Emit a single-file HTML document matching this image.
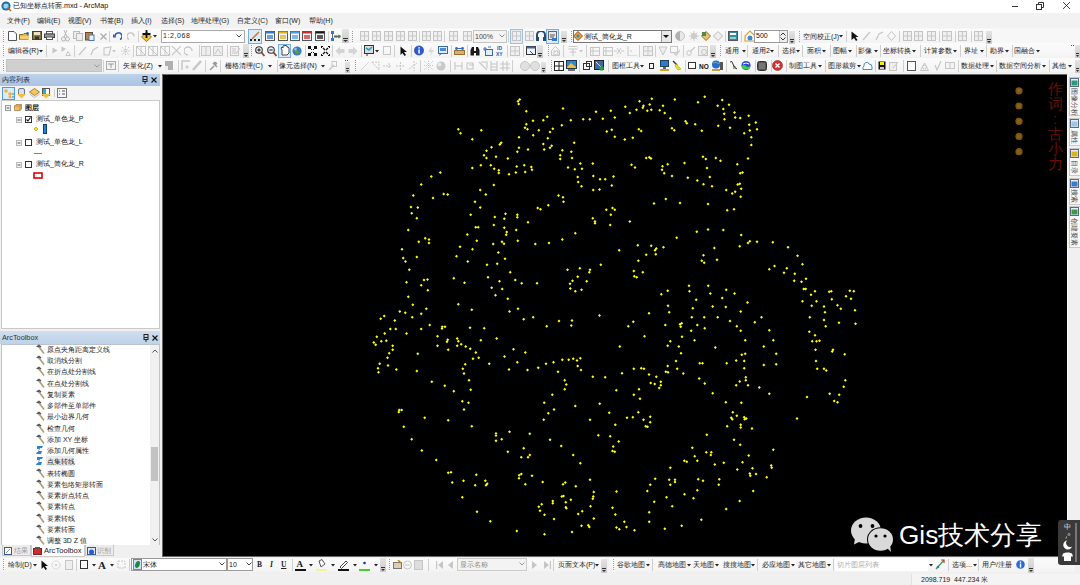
<!DOCTYPE html>
<html><head><meta charset="utf-8">
<style>
*{margin:0;padding:0;box-sizing:border-box}
html,body{width:1080px;height:585px;overflow:hidden;background:#f0f0f0;font-family:"Liberation Sans",sans-serif;color:#000;position:relative}
.a{position:absolute}
.t{position:absolute;white-space:nowrap}
</style></head><body>
<div class="a" style="left:0px;top:0px;width:1080px;height:13px;background:#fff"></div>
<svg class="a" style="left:1px;top:1px" width="11" height="11" viewBox="0 0 11 11"><circle cx="5" cy="5" r="4.6" fill="#1d6fa5"/><circle cx="5" cy="5" r="2.6" fill="#9fd3ea"/><path d="M6.5 6.5L10 10" stroke="#c0601a" stroke-width="1.6"/></svg>
<div class="t" style="left:13px;top:2px;font-size:7.2px;line-height:8.2px;color:#111;">已知坐标点转面.mxd - ArcMap</div>
<div class="a" style="left:1012px;top:6px;width:6px;height:1px;background:#333"></div>
<svg class="a" style="left:1036px;top:2px" width="8" height="8" viewBox="0 0 8 8"><rect x="0.5" y="2.5" width="5" height="5" fill="none" stroke="#333"/><path d="M2.5 2.5V0.5H7.5V5.5H5.5" fill="none" stroke="#333"/></svg>
<svg class="a" style="left:1063px;top:2px" width="7" height="7" viewBox="0 0 7 7"><path d="M0 0L7 7M7 0L0 7" stroke="#333" stroke-width="0.9"/></svg>
<div class="a" style="left:0px;top:13px;width:1080px;height:15px;background:#f2f2f2"></div>
<div class="t" style="left:7px;top:16.5px;font-size:7px;line-height:8px;color:#222;">文件(F)</div>
<div class="t" style="left:37px;top:16.5px;font-size:7px;line-height:8px;color:#222;">编辑(E)</div>
<div class="t" style="left:68px;top:16.5px;font-size:7px;line-height:8px;color:#222;">视图(V)</div>
<div class="t" style="left:100px;top:16.5px;font-size:7px;line-height:8px;color:#222;">书签(B)</div>
<div class="t" style="left:131px;top:16.5px;font-size:7px;line-height:8px;color:#222;">插入(I)</div>
<div class="t" style="left:161px;top:16.5px;font-size:7px;line-height:8px;color:#222;">选择(S)</div>
<div class="t" style="left:191px;top:16.5px;font-size:7px;line-height:8px;color:#222;">地理处理(G)</div>
<div class="t" style="left:237px;top:16.5px;font-size:7px;line-height:8px;color:#222;">自定义(C)</div>
<div class="t" style="left:275px;top:16.5px;font-size:7px;line-height:8px;color:#222;">窗口(W)</div>
<div class="t" style="left:309px;top:16.5px;font-size:7px;line-height:8px;color:#222;">帮助(H)</div>
<div class="a" style="left:0px;top:28px;width:1080px;height:45px;background:#f7f7f7"></div>
<div class="a" style="left:0px;top:29px;width:993px;height:14px;background:linear-gradient(#fbfbfb,#f3f3f3)"></div>
<div class="a" style="left:0px;top:43px;width:1080px;height:15px;background:linear-gradient(#fbfbfb,#f3f3f3)"></div>
<div class="a" style="left:0px;top:58px;width:1080px;height:15px;background:linear-gradient(#fbfbfb,#f3f3f3)"></div>
<div class="a" style="left:0px;top:72px;width:1080px;height:2px;background:#f0f0f0"></div>
<svg class="a" style="left:3px;top:31px" width="1" height="11" viewBox="0 0 1 11"><rect x="0" y="0" width="1" height="1" fill="#9a9a9a"/><rect x="0" y="2" width="1" height="1" fill="#9a9a9a"/><rect x="0" y="4" width="1" height="1" fill="#9a9a9a"/><rect x="0" y="6" width="1" height="1" fill="#9a9a9a"/><rect x="0" y="8" width="1" height="1" fill="#9a9a9a"/><rect x="0" y="10" width="1" height="1" fill="#9a9a9a"/></svg>
<svg class="a" style="left:8px;top:31px" width="9" height="10" viewBox="0 0 9 10"><path d="M0.5 0.5H6L8.5 3V9.5H0.5Z" fill="#f8fbff" stroke="#555"/></svg>
<svg class="a" style="left:19px;top:32px" width="11" height="8" viewBox="0 0 11 8"><path d="M0.5 2.5H4L5 1.5H9V7.5H0.5Z" fill="#e8b84a" stroke="#8a6a1a"/><rect x="1" y="4" width="9" height="3.5" fill="#f2cf6b"/><circle cx="8.5" cy="1.5" r="1.4" fill="#2a6fc9"/></svg>
<svg class="a" style="left:32px;top:31px" width="10" height="9" viewBox="0 0 10 9"><rect x="0.5" y="0.5" width="9" height="8" fill="#8a7840" stroke="#4a4020"/><rect x="2" y="1" width="6" height="3" fill="#e9e4c8"/><rect x="3" y="5.5" width="4" height="3" fill="#333"/></svg>
<svg class="a" style="left:44px;top:31px" width="11" height="9" viewBox="0 0 11 9"><rect x="2.5" y="0.5" width="6" height="2.5" fill="#fff" stroke="#555"/><rect x="0.5" y="3" width="10" height="3.5" fill="#9a9a9a" stroke="#444"/><rect x="2.5" y="6" width="6" height="2.5" fill="#fff" stroke="#555"/></svg>
<div class="a" style="left:57px;top:31px;width:1px;height:11px;background:#cfcfcf"></div>
<svg class="a" style="left:61px;top:30px" width="9" height="12" viewBox="0 0 9 12"><circle cx="2.5" cy="9" r="2" fill="none" stroke="#b5b5b5"/><circle cx="6.5" cy="9" r="2" fill="none" stroke="#b5b5b5"/><path d="M3 7L6 0M6 7L3 0" stroke="#b5b5b5"/></svg>
<svg class="a" style="left:73px;top:31px" width="10" height="10" viewBox="0 0 10 10"><rect x="0.5" y="0.5" width="6" height="7" fill="#eee" stroke="#bbb"/><rect x="3.5" y="2.5" width="6" height="7" fill="#eee" stroke="#bbb"/></svg>
<svg class="a" style="left:85px;top:31px" width="10" height="10" viewBox="0 0 10 10"><rect x="0.5" y="1.5" width="7" height="7.5" fill="#b9834a" stroke="#6a4a2a"/><rect x="4" y="4" width="5" height="5.5" fill="#eaf2fb" stroke="#4a7ab0"/></svg>
<svg class="a" style="left:100px;top:33px" width="7" height="7" viewBox="0 0 7 7"><path d="M0.5 0.5L6.5 6.5M6.5 0.5L0.5 6.5" stroke="#a8a8a8" stroke-width="1.1"/></svg>
<div class="a" style="left:109px;top:31px;width:1px;height:11px;background:#cfcfcf"></div>
<svg class="a" style="left:113px;top:32px" width="9" height="8" viewBox="0 0 9 8"><path d="M2 4.5 A3.5 3.5 0 1 1 7 7.5" fill="none" stroke="#2a5db0" stroke-width="1.5"/><path d="M0 2L3.5 5.5H0Z" fill="#2a5db0"/></svg>
<svg class="a" style="left:127px;top:32px" width="9" height="8" viewBox="0 0 9 8"><path d="M7 4.5 A3.5 3.5 0 1 0 2 7.5" fill="none" stroke="#c4c4c4" stroke-width="1.3"/></svg>
<div class="a" style="left:138px;top:31px;width:1px;height:11px;background:#cfcfcf"></div>
<svg class="a" style="left:141px;top:30px" width="11" height="12" viewBox="0 0 11 12"><path d="M5.5 2L10.5 7L5.5 11.5L0.5 7Z" fill="#f0c040" stroke="#9a7a20"/><path d="M5.5 0V8M1.5 4H9.5" stroke="#111" stroke-width="1.8"/></svg>
<svg class="a" style="left:153px;top:35px" width="4" height="3" viewBox="0 0 4 3"><path d="M0 0 L4 0 L2 2.5Z" fill="#222"/></svg>
<div class="a" style="left:161px;top:30px;width:84px;height:13px;background:#fff;border:1px solid #a9a9a9"></div>
<div class="t" style="left:163px;top:32px;font-size:7px;line-height:8px;color:#222;letter-spacing:0.6px">1:2,068</div>
<svg class="a" style="left:236px;top:34px" width="6" height="4" viewBox="0 0 6 4"><path d="M0.5 0.5L3 3L5.5 0.5" fill="none" stroke="#444"/></svg>
<div class="a" style="left:248px;top:29px;width:14px;height:15px;background:#dcebfa;border:1px solid #74aee8"></div>
<svg class="a" style="left:250px;top:31px" width="10" height="10" viewBox="0 0 10 10"><path d="M2 8L9 1" stroke="#d08030" stroke-width="1.6"/><rect x="0" y="8" width="2" height="2" fill="#222"/><rect x="4" y="8" width="2" height="2" fill="#222"/><rect x="8" y="8" width="2" height="2" fill="#222"/></svg>
<svg class="a" style="left:265px;top:31px" width="10" height="10" viewBox="0 0 10 10"><rect x="0.5" y="0.5" width="9" height="9" fill="#f2f5fa" stroke="#555"/><rect x="0.5" y="0.5" width="9" height="2" fill="#3a78c8"/><rect x="2" y="4" width="6" height="4" fill="#3a78c8" opacity="0.7"/></svg>
<svg class="a" style="left:278px;top:31px" width="10" height="10" viewBox="0 0 10 10"><rect x="0.5" y="0.5" width="9" height="9" fill="#f2f5fa" stroke="#555"/><rect x="0.5" y="0.5" width="9" height="2" fill="#e0b020"/><rect x="2" y="4" width="6" height="4" fill="#e0b020" opacity="0.7"/></svg>
<svg class="a" style="left:290px;top:31px" width="10" height="10" viewBox="0 0 10 10"><rect x="0.5" y="0.5" width="9" height="9" fill="#f2f5fa" stroke="#555"/><rect x="0.5" y="0.5" width="9" height="2" fill="#4aa0e0"/><rect x="2" y="4" width="6" height="4" fill="#4aa0e0" opacity="0.7"/></svg>
<svg class="a" style="left:302px;top:31px" width="10" height="10" viewBox="0 0 10 10"><rect x="0.5" y="0.5" width="9" height="9" fill="#f2f5fa" stroke="#555"/><rect x="0.5" y="0.5" width="9" height="2" fill="#c83030"/><rect x="2" y="4" width="6" height="4" fill="#c83030" opacity="0.7"/></svg>
<svg class="a" style="left:315px;top:31px" width="10" height="10" viewBox="0 0 10 10"><rect x="0.5" y="0.5" width="9" height="9" fill="#f2f5fa" stroke="#555"/><rect x="0.5" y="0.5" width="9" height="2" fill="#1a1a1a"/><rect x="2" y="4" width="6" height="4" fill="#1a1a1a" opacity="0.7"/></svg>
<div class="a" style="left:328px;top:31px;width:1px;height:11px;background:#cfcfcf"></div>
<svg class="a" style="left:331px;top:31px" width="10" height="11" viewBox="0 0 10 11"><rect x="0" y="0" width="3" height="3" fill="#2a78d0"/><rect x="0" y="7" width="3" height="3" fill="#2a78d0"/><rect x="3" y="4" width="3" height="3" fill="#c8a040"/><circle cx="8" cy="5.5" r="1.8" fill="#40a040"/><path d="M1.5 3V7M3 5.5H8" stroke="#666"/></svg>
<div class="a" style="left:342px;top:29px;width:7px;height:14px;background:linear-gradient(#e4e4e4,#c9c9c9)"></div>
<svg class="a" style="left:342px;top:38px" width="7" height="4" viewBox="0 0 7 4"><rect x="1" y="0" width="5" height="1" fill="#333"/><path d="M1 2 L6 2 L3.5 4Z" fill="#333"/></svg>
<svg class="a" style="left:352px;top:31px" width="1" height="11" viewBox="0 0 1 11"><rect x="0" y="0" width="1" height="1" fill="#9a9a9a"/><rect x="0" y="2" width="1" height="1" fill="#9a9a9a"/><rect x="0" y="4" width="1" height="1" fill="#9a9a9a"/><rect x="0" y="6" width="1" height="1" fill="#9a9a9a"/><rect x="0" y="8" width="1" height="1" fill="#9a9a9a"/><rect x="0" y="10" width="1" height="1" fill="#9a9a9a"/></svg>
<svg class="a" style="left:360px;top:31px" width="9" height="10" viewBox="0 0 9 10"><rect x="0.5" y="0.5" width="8" height="9" fill="#f0f0f0" stroke="#c4c4c4"/><path d="M0.5 5.0H8.5 M4.5 0.5V9.5" stroke="#c8c8c8"/></svg>
<svg class="a" style="left:372px;top:31px" width="9" height="10" viewBox="0 0 9 10"><rect x="0.5" y="0.5" width="8" height="9" fill="#f0f0f0" stroke="#c4c4c4"/><path d="M0.5 5.0H8.5 M4.5 0.5V9.5" stroke="#c8c8c8"/></svg>
<svg class="a" style="left:384px;top:31px" width="9" height="10" viewBox="0 0 9 10"><rect x="0.5" y="0.5" width="8" height="9" fill="#f0f0f0" stroke="#c4c4c4"/><path d="M0.5 5.0H8.5 M4.5 0.5V9.5" stroke="#c8c8c8"/></svg>
<svg class="a" style="left:396px;top:31px" width="9" height="10" viewBox="0 0 9 10"><rect x="0.5" y="0.5" width="8" height="9" fill="#f0f0f0" stroke="#c4c4c4"/><path d="M0.5 5.0H8.5 M4.5 0.5V9.5" stroke="#c8c8c8"/></svg>
<svg class="a" style="left:408px;top:31px" width="9" height="10" viewBox="0 0 9 10"><rect x="0.5" y="0.5" width="8" height="9" fill="#f0f0f0" stroke="#c4c4c4"/><path d="M0.5 5.0H8.5 M4.5 0.5V9.5" stroke="#c8c8c8"/></svg>
<div class="a" style="left:419px;top:31px;width:1px;height:11px;background:#cfcfcf"></div>
<svg class="a" style="left:422px;top:31px" width="9" height="10" viewBox="0 0 9 10"><rect x="0.5" y="0.5" width="8" height="9" fill="#f0f0f0" stroke="#c4c4c4"/><path d="M0.5 5.0H8.5 M4.5 0.5V9.5" stroke="#c8c8c8"/></svg>
<svg class="a" style="left:433px;top:31px" width="9" height="10" viewBox="0 0 9 10"><rect x="0.5" y="0.5" width="8" height="9" fill="#f0f0f0" stroke="#c4c4c4"/><path d="M0.5 5.0H8.5 M4.5 0.5V9.5" stroke="#c8c8c8"/></svg>
<div class="a" style="left:444px;top:31px;width:1px;height:11px;background:#cfcfcf"></div>
<svg class="a" style="left:449px;top:31px" width="9" height="10" viewBox="0 0 9 10"><rect x="0.5" y="0.5" width="8" height="9" fill="#f0f0f0" stroke="#c4c4c4"/><path d="M0.5 5.0H8.5 M4.5 0.5V9.5" stroke="#c8c8c8"/></svg>
<svg class="a" style="left:463px;top:31px" width="9" height="10" viewBox="0 0 9 10"><rect x="0.5" y="0.5" width="8" height="9" fill="#f0f0f0" stroke="#c4c4c4"/><path d="M0.5 5.0H8.5 M4.5 0.5V9.5" stroke="#c8c8c8"/></svg>
<div class="a" style="left:473px;top:30px;width:34px;height:13px;background:#f4f4f4;border:1px solid #c4c4c4"></div>
<div class="t" style="left:475px;top:32.5px;font-size:7px;line-height:8px;color:#444;">100%</div>
<svg class="a" style="left:499px;top:34px" width="6" height="4" viewBox="0 0 6 4"><path d="M0.5 0.5L3 3L5.5 0.5" fill="none" stroke="#888"/></svg>
<div class="a" style="left:508px;top:31px;width:1px;height:11px;background:#cfcfcf"></div>
<div class="a" style="left:510px;top:29px;width:13px;height:15px;background:#e4edf6;border:1px solid #9cc0e4"></div>
<svg class="a" style="left:512px;top:31px" width="9" height="10" viewBox="0 0 9 10"><rect x="0.5" y="0.5" width="8" height="9" fill="#f0f0f0" stroke="#c4c4c4"/><path d="M0.5 5.0H8.5 M4.5 0.5V9.5" stroke="#c8c8c8"/></svg>
<svg class="a" style="left:525px;top:31px" width="9" height="10" viewBox="0 0 9 10"><rect x="0.5" y="0.5" width="8" height="9" fill="#f0f0f0" stroke="#c4c4c4"/><path d="M0.5 5.0H8.5 M4.5 0.5V9.5" stroke="#c8c8c8"/></svg>
<svg class="a" style="left:536px;top:31px" width="10" height="10" viewBox="0 0 10 10"><path d="M1 9V4A4 4 0 0 1 9 4V9" fill="none" stroke="#2a4a6a" stroke-width="2"/><rect x="0" y="6" width="3" height="4" fill="#2a4a6a"/><rect x="7" y="6" width="3" height="4" fill="#2a4a6a"/></svg>
<div class="a" style="left:546px;top:29px;width:13px;height:15px;background:#dcebfa;border:1px solid #74aee8"></div>
<svg class="a" style="left:548px;top:31px" width="10" height="10" viewBox="0 0 10 10"><rect x="0.5" y="0.5" width="8" height="8" fill="#e8e8e8" stroke="#666"/><path d="M2 4H7M2 6H6" stroke="#555"/><rect x="4" y="7" width="5" height="3" fill="#3a78c8"/></svg>
<div class="a" style="left:561px;top:31px;width:6px;height:12px;background:linear-gradient(#e4e4e4,#c9c9c9)"></div>
<svg class="a" style="left:561px;top:38px" width="6" height="4" viewBox="0 0 6 4"><rect x="1" y="0" width="4" height="1" fill="#333"/><path d="M1 2 L5 2 L3.0 4Z" fill="#333"/></svg>
<svg class="a" style="left:571px;top:31px" width="1" height="11" viewBox="0 0 1 11"><rect x="0" y="0" width="1" height="1" fill="#9a9a9a"/><rect x="0" y="2" width="1" height="1" fill="#9a9a9a"/><rect x="0" y="4" width="1" height="1" fill="#9a9a9a"/><rect x="0" y="6" width="1" height="1" fill="#9a9a9a"/><rect x="0" y="8" width="1" height="1" fill="#9a9a9a"/><rect x="0" y="10" width="1" height="1" fill="#9a9a9a"/></svg>
<div class="a" style="left:573px;top:30px;width:99px;height:13px;background:#fff;border:1px solid #777"></div>
<svg class="a" style="left:573px;top:31px" width="10" height="10" viewBox="0 0 10 10"><path d="M5 0.5L9.5 5L5 9.5L0.5 5Z" fill="#f0a030" stroke="#a05010"/><path d="M5 3L7 5L5 7L3 5Z" fill="#3a8ad0"/></svg>
<div class="t" style="left:584px;top:32.5px;font-size:7px;line-height:8px;color:#111;">测试_简化龙_R</div>
<div class="a" style="left:661px;top:31px;width:10px;height:11px;background:#e8e8e8;border-left:1px solid #999"></div>
<svg class="a" style="left:663px;top:35px" width="6" height="4" viewBox="0 0 6 4"><path d="M0 0H6L3 3Z" fill="#111"/></svg>
<svg class="a" style="left:675px;top:31px" width="10" height="10" viewBox="0 0 10 10"><circle cx="5" cy="5" r="4.5" fill="#e8e8e8" stroke="#c4c4c4"/><path d="M5 0.5A4.5 4.5 0 0 0 5 9.5Z" fill="#b0b0b0"/></svg>
<svg class="a" style="left:689px;top:31px" width="10" height="10" viewBox="0 0 10 10"><circle cx="5" cy="5" r="3" fill="#ccc"/><path d="M5 0V10M0 5H10M1.5 1.5L8.5 8.5M8.5 1.5L1.5 8.5" stroke="#ccc"/></svg>
<svg class="a" style="left:701px;top:31px" width="10" height="10" viewBox="0 0 10 10"><path d="M5 0.5L9.5 5L5 9.5L0.5 5Z" fill="#e8c070" stroke="#9a7030"/><rect x="1" y="1" width="4" height="4" fill="#4a8a4a"/></svg>
<svg class="a" style="left:713px;top:31px" width="10" height="10" viewBox="0 0 10 10"><path d="M5 0.5L9.5 5L5 9.5L0.5 5Z" fill="#eee" stroke="#bbb"/></svg>
<div class="a" style="left:725px;top:31px;width:1px;height:11px;background:#cfcfcf"></div>
<svg class="a" style="left:728px;top:31px" width="10" height="10" viewBox="0 0 10 10"><rect x="0.5" y="0.5" width="9" height="9" fill="#3a8a9a" stroke="#555"/><rect x="2" y="2" width="6" height="2" fill="#fff"/><rect x="2" y="6" width="6" height="2" fill="#8ad0e0"/></svg>
<div class="a" style="left:741px;top:31px;width:1px;height:11px;background:#cfcfcf"></div>
<svg class="a" style="left:744px;top:30px" width="12" height="12" viewBox="0 0 12 12"><path d="M1 6L6 1L11 6V11H1Z" fill="#fff" stroke="#e0a030" stroke-width="1.2"/><circle cx="6" cy="8" r="2.5" fill="#3a8ad0"/></svg>
<div class="a" style="left:754px;top:30px;width:34px;height:13px;background:#fff;border:1px solid #999"></div>
<div class="t" style="left:756px;top:31.5px;font-size:7px;line-height:8px;color:#111;">500</div>
<div class="a" style="left:779px;top:31px;width:8px;height:11px;background:#eee;border-left:1px solid #bbb"></div>
<svg class="a" style="left:780px;top:32px" width="6" height="9" viewBox="0 0 6 9"><path d="M0.5 3.5L3 1L5.5 3.5M0.5 5.5L3 8L5.5 5.5" fill="none" stroke="#333"/></svg>
<div class="a" style="left:789px;top:31px;width:6px;height:13px;background:linear-gradient(#e4e4e4,#c9c9c9)"></div>
<svg class="a" style="left:789px;top:39px" width="6" height="4" viewBox="0 0 6 4"><rect x="1" y="0" width="4" height="1" fill="#333"/><path d="M1 2 L5 2 L3.0 4Z" fill="#333"/></svg>
<svg class="a" style="left:799px;top:31px" width="1" height="11" viewBox="0 0 1 11"><rect x="0" y="0" width="1" height="1" fill="#9a9a9a"/><rect x="0" y="2" width="1" height="1" fill="#9a9a9a"/><rect x="0" y="4" width="1" height="1" fill="#9a9a9a"/><rect x="0" y="6" width="1" height="1" fill="#9a9a9a"/><rect x="0" y="8" width="1" height="1" fill="#9a9a9a"/><rect x="0" y="10" width="1" height="1" fill="#9a9a9a"/></svg>
<div class="t" style="left:803px;top:32.5px;font-size:7px;line-height:8px;color:#222;">空间校正(J)</div>
<svg class="a" style="left:839px;top:35px" width="4" height="3" viewBox="0 0 4 3"><path d="M0 0 L4 0 L2 2.5Z" fill="#222"/></svg>
<div class="a" style="left:846px;top:31px;width:1px;height:11px;background:#cfcfcf"></div>
<svg class="a" style="left:851px;top:31px" width="8" height="10" viewBox="0 0 8 10"><path d="M0.5 0.5V9L3 7L5 10L6.5 9L4.5 6H7.5Z" fill="#111"/></svg>
<svg class="a" style="left:862px;top:31px" width="9" height="10" viewBox="0 0 9 10"><path d="M1 9L8 1" stroke="#c4c4c4" stroke-width="1.2"/></svg>
<svg class="a" style="left:875px;top:31px" width="9" height="10" viewBox="0 0 9 10"><path d="M1 9L4 3L8 1" fill="none" stroke="#c4c4c4" stroke-width="1.2"/></svg>
<svg class="a" style="left:887px;top:31px" width="9" height="10" viewBox="0 0 9 10"><path d="M4.5 0.5L8.5 5L4.5 9.5L0.5 5Z" fill="none" stroke="#c4c4c4"/></svg>
<div class="a" style="left:899px;top:31px;width:1px;height:11px;background:#cfcfcf"></div>
<svg class="a" style="left:903px;top:31px" width="9" height="10" viewBox="0 0 9 10"><rect x="0.5" y="0.5" width="8" height="9" fill="#f0f0f0" stroke="#c4c4c4"/><path d="M0.5 5.0H8.5 M4.5 0.5V9.5" stroke="#c8c8c8"/></svg>
<svg class="a" style="left:914px;top:31px" width="9" height="10" viewBox="0 0 9 10"><rect x="0.5" y="0.5" width="8" height="9" fill="#f0f0f0" stroke="#c4c4c4"/><path d="M0.5 5.0H8.5 M4.5 0.5V9.5" stroke="#c8c8c8"/></svg>
<svg class="a" style="left:927px;top:31px" width="9" height="10" viewBox="0 0 9 10"><rect x="0.5" y="0.5" width="8" height="9" fill="#f0f0f0" stroke="#c4c4c4"/><path d="M0.5 5.0H8.5 M4.5 0.5V9.5" stroke="#c8c8c8"/></svg>
<div class="a" style="left:939px;top:31px;width:1px;height:11px;background:#cfcfcf"></div>
<svg class="a" style="left:942px;top:31px" width="10" height="10" viewBox="0 0 10 10"><rect x="0.5" y="0.5" width="9" height="9" fill="#f0f0f0" stroke="#c4c4c4"/><path d="M0.5 5.0H9.5 M5.0 0.5V9.5" stroke="#c8c8c8"/></svg>
<div class="a" style="left:955px;top:31px;width:1px;height:11px;background:#cfcfcf"></div>
<svg class="a" style="left:958px;top:31px" width="9" height="10" viewBox="0 0 9 10"><rect x="0.5" y="0.5" width="8" height="9" fill="#f0f0f0" stroke="#c4c4c4"/><path d="M0.5 5.0H8.5 M4.5 0.5V9.5" stroke="#c8c8c8"/></svg>
<div class="a" style="left:971px;top:31px;width:1px;height:11px;background:#cfcfcf"></div>
<svg class="a" style="left:974px;top:31px" width="9" height="10" viewBox="0 0 9 10"><rect x="0.5" y="0.5" width="8" height="9" fill="#f0f0f0" stroke="#c4c4c4"/><path d="M0.5 5.0H8.5 M4.5 0.5V9.5" stroke="#c8c8c8"/></svg>
<div class="a" style="left:986px;top:31px;width:6px;height:13px;background:linear-gradient(#e4e4e4,#c9c9c9)"></div>
<svg class="a" style="left:986px;top:39px" width="6" height="4" viewBox="0 0 6 4"><rect x="1" y="0" width="4" height="1" fill="#333"/><path d="M1 2 L5 2 L3.0 4Z" fill="#333"/></svg>
<svg class="a" style="left:3px;top:45px" width="1" height="11" viewBox="0 0 1 11"><rect x="0" y="0" width="1" height="1" fill="#9a9a9a"/><rect x="0" y="2" width="1" height="1" fill="#9a9a9a"/><rect x="0" y="4" width="1" height="1" fill="#9a9a9a"/><rect x="0" y="6" width="1" height="1" fill="#9a9a9a"/><rect x="0" y="8" width="1" height="1" fill="#9a9a9a"/><rect x="0" y="10" width="1" height="1" fill="#9a9a9a"/></svg>
<div class="t" style="left:8px;top:47px;font-size:7px;line-height:8px;color:#222;">编辑器(R)</div>
<svg class="a" style="left:39px;top:50px" width="4" height="3" viewBox="0 0 4 3"><path d="M0 0 L4 0 L2 2.5Z" fill="#222"/></svg>
<div class="a" style="left:46px;top:45px;width:1px;height:12px;background:#cfcfcf"></div>
<svg class="a" style="left:52px;top:47px" width="6" height="7" viewBox="0 0 6 7"><path d="M0.5 0.5L5.5 3.5L0.5 6.5Z" fill="#c6c6c6"/></svg>
<svg class="a" style="left:61px;top:46px" width="10" height="10" viewBox="0 0 10 10"><path d="M0.5 0.5L5 3L0.5 6Z" fill="#c6c6c6"/><path d="M5 9.5L7 5.5L9.5 9.5Z" fill="none" stroke="#c6c6c6"/></svg>
<div class="a" style="left:74px;top:45px;width:1px;height:12px;background:#cfcfcf"></div>
<svg class="a" style="left:78px;top:46px" width="9" height="10" viewBox="0 0 9 10"><path d="M1 9L8 1" stroke="#c6c6c6" stroke-width="1.2"/></svg>
<svg class="a" style="left:90px;top:46px" width="9" height="10" viewBox="0 0 9 10"><path d="M1 9L3 4L8 1" fill="none" stroke="#c6c6c6" stroke-width="1.2"/></svg>
<svg class="a" style="left:103px;top:46px" width="9" height="10" viewBox="0 0 9 10"><path d="M1 9V2L8 1L6 9Z" fill="none" stroke="#c6c6c6" stroke-width="1.1"/></svg>
<svg class="a" style="left:112px;top:50px" width="4" height="3" viewBox="0 0 4 3"><path d="M0 0H4L2 2.5Z" fill="#c6c6c6"/></svg>
<svg class="a" style="left:121px;top:46px" width="9" height="10" viewBox="0 0 9 10"><path d="M4.5 0V10M0 5H9M1 1L8 9M8 1L1 9" stroke="#c6c6c6" stroke-dasharray="1.5 1"/></svg>
<div class="a" style="left:133px;top:45px;width:1px;height:12px;background:#cfcfcf"></div>
<svg class="a" style="left:136px;top:46px" width="10" height="10" viewBox="0 0 10 10"><rect x="0.5" y="0.5" width="9" height="9" fill="none" stroke="#c6c6c6"/><path d="M1 1L9 9M5 0V10" stroke="#c6c6c6"/></svg>
<svg class="a" style="left:148px;top:46px" width="10" height="10" viewBox="0 0 10 10"><rect x="0.5" y="0.5" width="9" height="9" fill="none" stroke="#c6c6c6"/><path d="M1 1L9 9M5 0V10" stroke="#c6c6c6"/></svg>
<svg class="a" style="left:160px;top:46px" width="10" height="10" viewBox="0 0 10 10"><rect x="0.5" y="0.5" width="9" height="9" fill="none" stroke="#c6c6c6"/><path d="M1 1L9 9M5 0V10" stroke="#c6c6c6"/></svg>
<svg class="a" style="left:172px;top:46px" width="9" height="10" viewBox="0 0 9 10"><path d="M0 0L9 9M9 0L0 9" stroke="#c6c6c6" stroke-width="1.1"/></svg>
<svg class="a" style="left:184px;top:46px" width="9" height="10" viewBox="0 0 9 10"><path d="M4 9A4 4 0 1 1 8 5" fill="none" stroke="#c6c6c6" stroke-width="1.4"/></svg>
<div class="a" style="left:199px;top:45px;width:1px;height:12px;background:#cfcfcf"></div>
<svg class="a" style="left:201px;top:46px" width="10" height="10" viewBox="0 0 10 10"><rect x="0.5" y="0.5" width="9" height="9" fill="#eee" stroke="#c6c6c6"/><path d="M5 0V10" stroke="#c6c6c6"/></svg>
<svg class="a" style="left:213px;top:46px" width="10" height="10" viewBox="0 0 10 10"><rect x="0.5" y="0.5" width="9" height="9" fill="#eee" stroke="#c6c6c6"/><path d="M2 8L5 3L8 8" fill="none" stroke="#c6c6c6"/></svg>
<div class="a" style="left:227px;top:45px;width:1px;height:12px;background:#cfcfcf"></div>
<svg class="a" style="left:230px;top:46px" width="10" height="10" viewBox="0 0 10 10"><rect x="0.5" y="0.5" width="8" height="9" fill="#f2f2f2" stroke="#c6c6c6"/><path d="M2 3H6M2 5H6M2 7H6M6 8L10 2" stroke="#c6c6c6"/></svg>
<div class="a" style="left:243px;top:44px;width:6px;height:14px;background:linear-gradient(#e4e4e4,#c9c9c9)"></div>
<svg class="a" style="left:243px;top:53px" width="6" height="4" viewBox="0 0 6 4"><rect x="1" y="0" width="4" height="1" fill="#333"/><path d="M1 2 L5 2 L3.0 4Z" fill="#333"/></svg>
<svg class="a" style="left:251px;top:45px" width="1" height="12" viewBox="0 0 1 12"><rect x="0" y="0" width="1" height="1" fill="#9a9a9a"/><rect x="0" y="2" width="1" height="1" fill="#9a9a9a"/><rect x="0" y="4" width="1" height="1" fill="#9a9a9a"/><rect x="0" y="6" width="1" height="1" fill="#9a9a9a"/><rect x="0" y="8" width="1" height="1" fill="#9a9a9a"/><rect x="0" y="10" width="1" height="1" fill="#9a9a9a"/></svg>
<svg class="a" style="left:255px;top:46px" width="10" height="11" viewBox="0 0 10 11"><circle cx="4" cy="4" r="3.3" fill="#eef4fb" stroke="#333" stroke-width="1.1"/><path d="M2.3 4H5.7M4 2.3V5.7" stroke="#111"/><path d="M6.5 6.5L9.5 10" stroke="#8a4a1a" stroke-width="1.8"/></svg>
<svg class="a" style="left:267px;top:46px" width="10" height="11" viewBox="0 0 10 11"><circle cx="4" cy="4" r="3.3" fill="#eef4fb" stroke="#333" stroke-width="1.1"/><path d="M2.3 4H5.7" stroke="#111"/><path d="M6.5 6.5L9.5 10" stroke="#8a4a1a" stroke-width="1.8"/></svg>
<div class="a" style="left:278px;top:44px;width:13px;height:14px;background:#dcebfa;border:1px solid #74aee8"></div>
<svg class="a" style="left:280px;top:45px" width="10" height="11" viewBox="0 0 10 11"><path d="M2 10V5L1 3L2 2L3 3V1L4 0.5L5 1V0.5L6 0.5L7 1V2L8 2L9 3V8L7 10Z" fill="#fff" stroke="#333" stroke-width="0.9"/></svg>
<svg class="a" style="left:292px;top:46px" width="10" height="10" viewBox="0 0 10 10"><circle cx="5" cy="5" r="4.6" fill="#3a7ac8"/><path d="M2 3Q4 2 5 4T8 6Q7 8 5 8Q3 7 2 3" fill="#5aa040"/><circle cx="3.5" cy="3" r="1.5" fill="#aad4f4" opacity=".7"/></svg>
<div class="a" style="left:305px;top:45px;width:1px;height:12px;background:#cfcfcf"></div>
<svg class="a" style="left:308px;top:46px" width="9" height="10" viewBox="0 0 9 10"><path d="M0 0H3V3H0ZM6 0H9V3H6ZM0 7H3V10H0ZM6 7H9V10H6Z" fill="#111"/><path d="M3 3L4 4M6 3L5 4M3 7L4 6M6 7L5 6" stroke="#111"/></svg>
<svg class="a" style="left:321px;top:46px" width="9" height="10" viewBox="0 0 9 10"><path d="M0 0H2V1H1V2H0ZM7 0H9V2H8V1H7ZM0 8H1V9H2V10H0ZM9 8V10H7V9H8V8Z" fill="#111"/><path d="M2 2L4 4M7 2L5 4M2 8L4 6M7 8L5 6" stroke="#111" stroke-width="1.3"/></svg>
<div class="a" style="left:332px;top:45px;width:1px;height:12px;background:#cfcfcf"></div>
<svg class="a" style="left:335px;top:46px" width="10" height="10" viewBox="0 0 10 10"><path d="M0.5 5L5 0.5V3H9.5V7H5V9.5Z" fill="#d4d4d4"/></svg>
<svg class="a" style="left:348px;top:46px" width="10" height="10" viewBox="0 0 10 10"><path d="M9.5 5L5 0.5V3H0.5V7H5V9.5Z" fill="#d4d4d4"/></svg>
<div class="a" style="left:361px;top:45px;width:1px;height:12px;background:#cfcfcf"></div>
<svg class="a" style="left:364px;top:45px" width="10" height="11" viewBox="0 0 10 11"><rect x="0.5" y="0.5" width="9" height="8" fill="#ddd" stroke="#333"/><path d="M2 3L5 5L8 2" stroke="#2a9ad0" stroke-width="1.6" fill="none"/><path d="M3 8L3 11" stroke="#333"/></svg>
<svg class="a" style="left:375px;top:50px" width="4" height="3" viewBox="0 0 4 3"><path d="M0 0 L4 0 L2 2.5Z" fill="#222"/></svg>
<svg class="a" style="left:383px;top:46px" width="8" height="9" viewBox="0 0 8 9"><rect x="0.5" y="0.5" width="7" height="8" fill="none" stroke="#c6c6c6"/></svg>
<div class="a" style="left:394px;top:45px;width:1px;height:12px;background:#cfcfcf"></div>
<svg class="a" style="left:400px;top:46px" width="7" height="10" viewBox="0 0 7 10"><path d="M0.5 0.5V9L2.5 7L4.5 10L6 9L4 6H7Z" fill="#111"/></svg>
<div class="a" style="left:411px;top:45px;width:1px;height:12px;background:#cfcfcf"></div>
<svg class="a" style="left:414px;top:45px" width="10" height="11" viewBox="0 0 10 11"><circle cx="5" cy="5.5" r="4.6" fill="#2a5ad8" stroke="#1a3a90" stroke-width=".6"/><rect x="4.3" y="4.5" width="1.5" height="4" fill="#fff"/><rect x="4.3" y="2.2" width="1.5" height="1.4" fill="#fff"/></svg>
<svg class="a" style="left:427px;top:46px" width="8" height="10" viewBox="0 0 8 10"><path d="M5 0L1 6H4L3 10L7 4H4Z" fill="#d8d8d8"/></svg>
<svg class="a" style="left:438px;top:46px" width="10" height="10" viewBox="0 0 10 10"><rect x="0.5" y="0.5" width="9" height="7" fill="#dfeefa" stroke="#3a6aa0"/><rect x="2" y="2" width="6" height="3" fill="#4a8ad0"/><path d="M2 7.5L1 10L4 7.5" fill="#3a6aa0"/></svg>
<div class="a" style="left:451px;top:45px;width:1px;height:12px;background:#cfcfcf"></div>
<svg class="a" style="left:454px;top:47px" width="11" height="8" viewBox="0 0 11 8"><rect x="0.5" y="3.5" width="10" height="4" fill="#d8b070" stroke="#9a7030"/><circle cx="2.5" cy="1.5" r="1.4" fill="#2a6ac8"/><circle cx="8.5" cy="1.5" r="1.4" fill="#2a6ac8"/><path d="M2.5 1.5H8.5" stroke="#2a6ac8"/></svg>
<div class="a" style="left:467px;top:45px;width:1px;height:12px;background:#cfcfcf"></div>
<svg class="a" style="left:470px;top:46px" width="10" height="10" viewBox="0 0 10 10"><path d="M0.5 9.5V4L2 1H4V5H6V1H8L9.5 4V9.5H6V7H4V9.5Z" fill="#1a1a1a"/></svg>
<svg class="a" style="left:482px;top:46px" width="11" height="10" viewBox="0 0 11 10"><rect x="3.5" y="3.5" width="7" height="6" fill="#dfeefa" stroke="#3a6aa0"/><path d="M1 3H5M3 1V5M6 1H9" stroke="#3a7ac8" stroke-width="1.2"/></svg>
<svg class="a" style="left:496px;top:45px" width="9" height="11" viewBox="0 0 9 11"><text x="1" y="5" font-size="5" font-family="Liberation Sans" font-weight="bold" fill="#1a5ab0">ID</text><text x="0" y="10.5" font-size="5" font-family="Liberation Sans" font-weight="bold" fill="#1a5ab0">XY</text></svg>
<div class="a" style="left:507px;top:45px;width:1px;height:12px;background:#cfcfcf"></div>
<svg class="a" style="left:510px;top:46px" width="10" height="10" viewBox="0 0 10 10"><rect x="0.5" y="0.5" width="9" height="9" fill="#f0f0f0" stroke="#c4c4c4"/><path d="M0.5 5.0H9.5 M5.0 0.5V9.5" stroke="#c8c8c8"/></svg>
<div class="a" style="left:523px;top:45px;width:1px;height:12px;background:#cfcfcf"></div>
<svg class="a" style="left:526px;top:46px" width="10" height="10" viewBox="0 0 10 10"><rect x="0.5" y="0.5" width="9" height="8" fill="#eef2f8" stroke="#333"/><rect x="0.5" y="0.5" width="9" height="2" fill="#3a6aa0"/><path d="M4 5L7 8" stroke="#a03030"/></svg>
<div class="a" style="left:537px;top:45px;width:6px;height:13px;background:linear-gradient(#e4e4e4,#c9c9c9)"></div>
<svg class="a" style="left:537px;top:53px" width="6" height="4" viewBox="0 0 6 4"><rect x="1" y="0" width="4" height="1" fill="#333"/><path d="M1 2 L5 2 L3.0 4Z" fill="#333"/></svg>
<svg class="a" style="left:548px;top:45px" width="1" height="12" viewBox="0 0 1 12"><rect x="0" y="0" width="1" height="1" fill="#9a9a9a"/><rect x="0" y="2" width="1" height="1" fill="#9a9a9a"/><rect x="0" y="4" width="1" height="1" fill="#9a9a9a"/><rect x="0" y="6" width="1" height="1" fill="#9a9a9a"/><rect x="0" y="8" width="1" height="1" fill="#9a9a9a"/><rect x="0" y="10" width="1" height="1" fill="#9a9a9a"/></svg>
<svg class="a" style="left:551px;top:46px" width="9" height="10" viewBox="0 0 9 10"><path d="M0.5 4.5L4.5 0.5L8.5 4.5V9.5H0.5Z" fill="none" stroke="#c6c6c6"/><rect x="3" y="5" width="4" height="4" fill="none" stroke="#c6c6c6"/></svg>
<div class="a" style="left:563px;top:45px;width:1px;height:12px;background:#cfcfcf"></div>
<svg class="a" style="left:568px;top:46px" width="10" height="10" viewBox="0 0 10 10"><path d="M0.5 0.5H9.5M0.5 3H9.5M5 3V10M2 6H8" stroke="#c6c6c6"/></svg>
<svg class="a" style="left:579px;top:50px" width="4" height="3" viewBox="0 0 4 3"><path d="M0 0H4L2 2.5Z" fill="#c6c6c6"/></svg>
<div class="a" style="left:586px;top:45px;width:1px;height:12px;background:#cfcfcf"></div>
<svg class="a" style="left:590px;top:46px" width="10" height="10" viewBox="0 0 10 10"><rect x="0.5" y="1.5" width="9" height="8" fill="none" stroke="#c6c6c6"/><path d="M3 1V10M0 5H10" stroke="#c6c6c6"/></svg>
<svg class="a" style="left:603px;top:46px" width="10" height="10" viewBox="0 0 10 10"><rect x="0.5" y="1.5" width="9" height="8" fill="none" stroke="#c6c6c6"/><path d="M3 1V10M0 5H10" stroke="#c6c6c6"/></svg>
<svg class="a" style="left:614px;top:46px" width="10" height="10" viewBox="0 0 10 10"><path d="M0 5H3M7 5H10M3 2L7 8M7 2L3 8" stroke="#c6c6c6"/></svg>
<svg class="a" style="left:627px;top:46px" width="10" height="10" viewBox="0 0 10 10"><path d="M1 0V10H10M3 4L5 6" fill="none" stroke="#c6c6c6"/></svg>
<div class="a" style="left:639px;top:45px;width:1px;height:12px;background:#cfcfcf"></div>
<svg class="a" style="left:643px;top:46px" width="10" height="10" viewBox="0 0 10 10"><rect x="0.5" y="0.5" width="9" height="9" fill="#f0f0f0" stroke="#c4c4c4"/><path d="M0.5 5.0H9.5 M5.0 0.5V9.5" stroke="#c8c8c8"/></svg>
<div class="a" style="left:655px;top:45px;width:1px;height:12px;background:#cfcfcf"></div>
<svg class="a" style="left:658px;top:46px" width="10" height="10" viewBox="0 0 10 10"><path d="M1 1L9 1L5 9Z" fill="#eee" stroke="#c6c6c6"/></svg>
<svg class="a" style="left:670px;top:46px" width="10" height="10" viewBox="0 0 10 10"><rect x="0.5" y="0.5" width="7" height="6" fill="none" stroke="#c6c6c6"/><path d="M4 7L6 9L10 4" fill="none" stroke="#c6c6c6" stroke-width="1.2"/></svg>
<div class="a" style="left:683px;top:45px;width:1px;height:12px;background:#cfcfcf"></div>
<svg class="a" style="left:686px;top:46px" width="10" height="10" viewBox="0 0 10 10"><circle cx="3" cy="7" r="2.3" fill="none" stroke="#c6c6c6"/><path d="M4.5 5.5L9 1" stroke="#c6c6c6" stroke-width="1.3"/></svg>
<svg class="a" style="left:698px;top:46px" width="10" height="10" viewBox="0 0 10 10"><rect x="0.5" y="0.5" width="9" height="9" fill="#eee" stroke="#c6c6c6"/><circle cx="6" cy="6" r="2.5" fill="none" stroke="#c6c6c6"/></svg>
<div class="a" style="left:710px;top:45px;width:6px;height:13px;background:linear-gradient(#e4e4e4,#c9c9c9)"></div>
<svg class="a" style="left:710px;top:53px" width="6" height="4" viewBox="0 0 6 4"><rect x="1" y="0" width="4" height="1" fill="#333"/><path d="M1 2 L5 2 L3.0 4Z" fill="#333"/></svg>
<svg class="a" style="left:720px;top:45px" width="1" height="12" viewBox="0 0 1 12"><rect x="0" y="0" width="1" height="1" fill="#9a9a9a"/><rect x="0" y="2" width="1" height="1" fill="#9a9a9a"/><rect x="0" y="4" width="1" height="1" fill="#9a9a9a"/><rect x="0" y="6" width="1" height="1" fill="#9a9a9a"/><rect x="0" y="8" width="1" height="1" fill="#9a9a9a"/><rect x="0" y="10" width="1" height="1" fill="#9a9a9a"/></svg>
<div class="t" style="left:725px;top:47px;font-size:7px;line-height:8px;color:#222;">通用</div>
<svg class="a" style="left:742px;top:50px" width="4" height="3" viewBox="0 0 4 3"><path d="M0 0 L4 0 L2 2.5Z" fill="#222"/></svg>
<div class="t" style="left:752px;top:47px;font-size:7px;line-height:8px;color:#222;">通用2</div>
<svg class="a" style="left:770px;top:50px" width="4" height="3" viewBox="0 0 4 3"><path d="M0 0 L4 0 L2 2.5Z" fill="#222"/></svg>
<div class="t" style="left:782px;top:47px;font-size:7px;line-height:8px;color:#222;">选择</div>
<svg class="a" style="left:796px;top:50px" width="4" height="3" viewBox="0 0 4 3"><path d="M0 0 L4 0 L2 2.5Z" fill="#222"/></svg>
<div class="t" style="left:807px;top:47px;font-size:7px;line-height:8px;color:#222;">面积</div>
<svg class="a" style="left:822px;top:50px" width="4" height="3" viewBox="0 0 4 3"><path d="M0 0 L4 0 L2 2.5Z" fill="#222"/></svg>
<div class="t" style="left:833px;top:47px;font-size:7px;line-height:8px;color:#222;">图幅</div>
<svg class="a" style="left:848px;top:50px" width="4" height="3" viewBox="0 0 4 3"><path d="M0 0 L4 0 L2 2.5Z" fill="#222"/></svg>
<div class="t" style="left:858px;top:47px;font-size:7px;line-height:8px;color:#222;">影像</div>
<svg class="a" style="left:874px;top:50px" width="4" height="3" viewBox="0 0 4 3"><path d="M0 0 L4 0 L2 2.5Z" fill="#222"/></svg>
<div class="t" style="left:883px;top:47px;font-size:7px;line-height:8px;color:#222;">坐标转换</div>
<svg class="a" style="left:912px;top:50px" width="4" height="3" viewBox="0 0 4 3"><path d="M0 0 L4 0 L2 2.5Z" fill="#222"/></svg>
<div class="t" style="left:924px;top:47px;font-size:7px;line-height:8px;color:#222;">计算参数</div>
<svg class="a" style="left:953px;top:50px" width="4" height="3" viewBox="0 0 4 3"><path d="M0 0 L4 0 L2 2.5Z" fill="#222"/></svg>
<div class="t" style="left:964px;top:47px;font-size:7px;line-height:8px;color:#222;">界址</div>
<svg class="a" style="left:980px;top:50px" width="4" height="3" viewBox="0 0 4 3"><path d="M0 0 L4 0 L2 2.5Z" fill="#222"/></svg>
<div class="t" style="left:990px;top:47px;font-size:7px;line-height:8px;color:#222;">勘界</div>
<svg class="a" style="left:1005px;top:50px" width="4" height="3" viewBox="0 0 4 3"><path d="M0 0 L4 0 L2 2.5Z" fill="#222"/></svg>
<div class="t" style="left:1014px;top:47px;font-size:7px;line-height:8px;color:#222;">国融合</div>
<svg class="a" style="left:1036px;top:50px" width="4" height="3" viewBox="0 0 4 3"><path d="M0 0 L4 0 L2 2.5Z" fill="#222"/></svg>
<div class="a" style="left:747px;top:45px;width:1px;height:12px;background:#cfcfcf"></div>
<div class="a" style="left:778px;top:45px;width:1px;height:12px;background:#cfcfcf"></div>
<div class="a" style="left:802px;top:45px;width:1px;height:12px;background:#cfcfcf"></div>
<div class="a" style="left:830px;top:45px;width:1px;height:12px;background:#cfcfcf"></div>
<div class="a" style="left:856px;top:45px;width:1px;height:12px;background:#cfcfcf"></div>
<div class="a" style="left:880px;top:45px;width:1px;height:12px;background:#cfcfcf"></div>
<div class="a" style="left:920px;top:45px;width:1px;height:12px;background:#cfcfcf"></div>
<div class="a" style="left:960px;top:45px;width:1px;height:12px;background:#cfcfcf"></div>
<div class="a" style="left:986px;top:45px;width:1px;height:12px;background:#cfcfcf"></div>
<div class="a" style="left:1012px;top:45px;width:1px;height:12px;background:#cfcfcf"></div>
<svg class="a" style="left:1071px;top:45px" width="4" height="3" viewBox="0 0 4 3"><rect x="0" y="0" width="1" height="1" fill="#555"/><rect x="2" y="0" width="1" height="1" fill="#555"/></svg>
<div class="a" style="left:1075px;top:45px;width:5px;height:13px;background:linear-gradient(#e4e4e4,#c9c9c9)"></div>
<svg class="a" style="left:1075px;top:53px" width="5" height="4" viewBox="0 0 5 4"><rect x="1" y="0" width="3" height="1" fill="#333"/><path d="M1 2 L4 2 L2.5 4Z" fill="#333"/></svg>
<svg class="a" style="left:3px;top:60px" width="1" height="12" viewBox="0 0 1 12"><rect x="0" y="0" width="1" height="1" fill="#9a9a9a"/><rect x="0" y="2" width="1" height="1" fill="#9a9a9a"/><rect x="0" y="4" width="1" height="1" fill="#9a9a9a"/><rect x="0" y="6" width="1" height="1" fill="#9a9a9a"/><rect x="0" y="8" width="1" height="1" fill="#9a9a9a"/><rect x="0" y="10" width="1" height="1" fill="#9a9a9a"/></svg>
<div class="a" style="left:6px;top:59px;width:96px;height:13px;background:#cfcfcf;border:1px solid #c2c2c2"></div>
<svg class="a" style="left:94px;top:64px" width="6" height="4" viewBox="0 0 6 4"><path d="M0.5 0.5L3 3L5.5 0.5" fill="none" stroke="#999"/></svg>
<div class="a" style="left:103px;top:60px;width:1px;height:12px;background:#cfcfcf"></div>
<svg class="a" style="left:106px;top:61px" width="10" height="9" viewBox="0 0 10 9"><rect x="0.5" y="0.5" width="9" height="8" fill="#f4f4f4" stroke="#aaa"/><path d="M2 3H8M5 3V7" stroke="#999"/></svg>
<div class="a" style="left:118px;top:60px;width:1px;height:12px;background:#cfcfcf"></div>
<div class="t" style="left:123px;top:62px;font-size:7px;line-height:8px;color:#222;">矢量化(Z)</div>
<svg class="a" style="left:158px;top:65px" width="4" height="3" viewBox="0 0 4 3"><path d="M0 0 L4 0 L2 2.5Z" fill="#222"/></svg>
<svg class="a" style="left:165px;top:61px" width="8" height="9" viewBox="0 0 8 9"><rect x="0" y="0" width="8" height="9" fill="#b0b0b0"/><rect x="0" y="5" width="3" height="4" fill="#eee"/></svg>
<div class="a" style="left:178px;top:60px;width:1px;height:12px;background:#cfcfcf"></div>
<svg class="a" style="left:181px;top:60px" width="10" height="11" viewBox="0 0 10 11"><path d="M1 10V1H9" fill="none" stroke="#c6c6c6" stroke-width="1.5"/><path d="M4 7H8M6 5V9" stroke="#c6c6c6"/></svg>
<svg class="a" style="left:192px;top:60px" width="10" height="11" viewBox="0 0 10 11"><path d="M1 10L9 1" stroke="#c6c6c6" stroke-width="2.5"/></svg>
<div class="a" style="left:205px;top:60px;width:1px;height:12px;background:#cfcfcf"></div>
<svg class="a" style="left:209px;top:61px" width="9" height="10" viewBox="0 0 9 10"><path d="M1 9L5 5M4 2L8 6M5 1L7 3L8 2" stroke="#999" stroke-width="1.5"/></svg>
<div class="a" style="left:220px;top:60px;width:1px;height:12px;background:#cfcfcf"></div>
<div class="t" style="left:225px;top:62px;font-size:7px;line-height:8px;color:#222;">栅格清理(C)</div>
<svg class="a" style="left:268px;top:65px" width="4" height="3" viewBox="0 0 4 3"><path d="M0 0 L4 0 L2 2.5Z" fill="#222"/></svg>
<div class="a" style="left:277px;top:60px;width:1px;height:12px;background:#cfcfcf"></div>
<div class="t" style="left:279px;top:62px;font-size:7px;line-height:8px;color:#222;">像元选择(N)</div>
<svg class="a" style="left:321px;top:65px" width="4" height="3" viewBox="0 0 4 3"><path d="M0 0 L4 0 L2 2.5Z" fill="#222"/></svg>
<svg class="a" style="left:328px;top:61px" width="9" height="10" viewBox="0 0 9 10"><rect x="4" y="0.5" width="4.5" height="5" fill="none" stroke="#c6c6c6"/><path d="M1 9L6 4" stroke="#c6c6c6" stroke-width="1.3"/></svg>
<svg class="a" style="left:345px;top:60px" width="4" height="3" viewBox="0 0 4 3"><rect x="0" y="0" width="1" height="1" fill="#555"/><rect x="2" y="0" width="1" height="1" fill="#555"/></svg>
<div class="a" style="left:345px;top:62px;width:5px;height:11px;background:linear-gradient(#e4e4e4,#c9c9c9)"></div>
<svg class="a" style="left:345px;top:68px" width="5" height="4" viewBox="0 0 5 4"><rect x="1" y="0" width="3" height="1" fill="#333"/><path d="M1 2 L4 2 L2.5 4Z" fill="#333"/></svg>
<svg class="a" style="left:355px;top:60px" width="1" height="12" viewBox="0 0 1 12"><rect x="0" y="0" width="1" height="1" fill="#9a9a9a"/><rect x="0" y="2" width="1" height="1" fill="#9a9a9a"/><rect x="0" y="4" width="1" height="1" fill="#9a9a9a"/><rect x="0" y="6" width="1" height="1" fill="#9a9a9a"/><rect x="0" y="8" width="1" height="1" fill="#9a9a9a"/><rect x="0" y="10" width="1" height="1" fill="#9a9a9a"/></svg>
<svg class="a" style="left:360px;top:61px" width="10" height="10" viewBox="0 0 10 10"><path d="M1 9L9 1" fill="none" stroke="#c6c6c6" stroke-dasharray="2 1"/></svg>
<svg class="a" style="left:371px;top:61px" width="10" height="10" viewBox="0 0 10 10"><path d="M1 1H8V9M1 1L8 9" fill="none" stroke="#c6c6c6" stroke-dasharray="2 1"/></svg>
<svg class="a" style="left:383px;top:61px" width="10" height="10" viewBox="0 0 10 10"><path d="M0 5H9M6 2V8" fill="none" stroke="#c6c6c6" stroke-dasharray="2 1"/></svg>
<svg class="a" style="left:396px;top:61px" width="10" height="10" viewBox="0 0 10 10"><path d="M0 5H9M4.5 1V9" fill="none" stroke="#c6c6c6" stroke-dasharray="2 1"/></svg>
<svg class="a" style="left:408px;top:61px" width="10" height="10" viewBox="0 0 10 10"><path d="M1 8L9 2M6 0V10" fill="none" stroke="#c6c6c6" stroke-dasharray="2 1"/></svg>
<div class="a" style="left:420px;top:60px;width:1px;height:12px;background:#cfcfcf"></div>
<svg class="a" style="left:424px;top:61px" width="9" height="10" viewBox="0 0 9 10"><path d="M0 0L9 9M9 0L0 9M4.5 0V9M0 4.5H9" stroke="#c6c6c6" stroke-dasharray="1 1"/></svg>
<svg class="a" style="left:436px;top:61px" width="10" height="10" viewBox="0 0 10 10"><circle cx="5" cy="5" r="4.5" fill="#c8c8c8"/><circle cx="3.5" cy="3.5" r="2" fill="#e8e8e8"/></svg>
<div class="a" style="left:450px;top:60px;width:1px;height:12px;background:#cfcfcf"></div>
<svg class="a" style="left:454px;top:61px" width="10" height="10" viewBox="0 0 10 10"><path d="M1 1V9M8 1V9M1 5H8" fill="none" stroke="#c6c6c6" stroke-width="1.1"/></svg>
<svg class="a" style="left:465px;top:61px" width="10" height="10" viewBox="0 0 10 10"><path d="M2 2H8V8H2ZM4 4H9" fill="none" stroke="#c6c6c6" stroke-width="1.1"/></svg>
<svg class="a" style="left:478px;top:61px" width="10" height="10" viewBox="0 0 10 10"><path d="M1 1L9 9M3 1H9V7" fill="none" stroke="#c6c6c6" stroke-width="1.1"/></svg>
<svg class="a" style="left:489px;top:61px" width="10" height="10" viewBox="0 0 10 10"><path d="M2 0V10M8 0V10M2 3H8M2 6H8M2 9H8" fill="none" stroke="#c6c6c6" stroke-width="1.1"/></svg>
<svg class="a" style="left:500px;top:61px" width="10" height="10" viewBox="0 0 10 10"><path d="M0 3H10M0 7H10M3 0V10M7 0V10" fill="none" stroke="#c6c6c6" stroke-width="1.1"/></svg>
<div class="a" style="left:512px;top:60px;width:1px;height:12px;background:#cfcfcf"></div>
<svg class="a" style="left:520px;top:61px" width="10" height="10" viewBox="0 0 10 10"><circle cx="5" cy="5" r="4.5" fill="#e0e0e0" stroke="#c6c6c6"/></svg>
<svg class="a" style="left:530px;top:61px" width="10" height="10" viewBox="0 0 10 10"><circle cx="5" cy="5" r="4.5" fill="#e0e0e0" stroke="#c6c6c6"/></svg>
<div class="a" style="left:541px;top:62px;width:5px;height:11px;background:linear-gradient(#e4e4e4,#c9c9c9)"></div>
<svg class="a" style="left:541px;top:68px" width="5" height="4" viewBox="0 0 5 4"><rect x="1" y="0" width="3" height="1" fill="#333"/><path d="M1 2 L4 2 L2.5 4Z" fill="#333"/></svg>
<svg class="a" style="left:551px;top:60px" width="1" height="12" viewBox="0 0 1 12"><rect x="0" y="0" width="1" height="1" fill="#9a9a9a"/><rect x="0" y="2" width="1" height="1" fill="#9a9a9a"/><rect x="0" y="4" width="1" height="1" fill="#9a9a9a"/><rect x="0" y="6" width="1" height="1" fill="#9a9a9a"/><rect x="0" y="8" width="1" height="1" fill="#9a9a9a"/><rect x="0" y="10" width="1" height="1" fill="#9a9a9a"/></svg>
<svg class="a" style="left:554px;top:61px" width="10" height="10" viewBox="0 0 10 10"><rect x="0.5" y="0.5" width="9" height="9" fill="#fff" stroke="#222"/><path d="M5 0V10M0 5H10" stroke="#222"/></svg>
<svg class="a" style="left:566px;top:60px" width="11" height="11" viewBox="0 0 11 11"><rect x="0.5" y="0.5" width="10" height="8" fill="#2a8ad8" stroke="#235"/><path d="M1 7L5 3L10 7V8H1Z" fill="#f0c040"/><rect x="2" y="9" width="7" height="2" fill="#777"/></svg>
<div class="a" style="left:579px;top:60px;width:1px;height:12px;background:#cfcfcf"></div>
<svg class="a" style="left:583px;top:61px" width="9" height="10" viewBox="0 0 9 10"><rect x="0.5" y="2.5" width="6" height="6" fill="none" stroke="#333"/><rect x="3.5" y="0.5" width="5" height="5" fill="none" stroke="#333"/></svg>
<svg class="a" style="left:594px;top:60px" width="10" height="11" viewBox="0 0 10 11"><rect x="0.5" y="0.5" width="9" height="9" fill="#3a6ab0" stroke="#222"/><path d="M2 2L8 8" stroke="#ddd"/><circle cx="7.5" cy="8.5" r="2.3" fill="#2aa040"/></svg>
<div class="a" style="left:608px;top:60px;width:1px;height:12px;background:#cfcfcf"></div>
<div class="t" style="left:612px;top:62px;font-size:7px;line-height:8px;color:#222;">图框工具</div>
<svg class="a" style="left:640px;top:65px" width="4" height="3" viewBox="0 0 4 3"><path d="M0 0 L4 0 L2 2.5Z" fill="#222"/></svg>
<svg class="a" style="left:649px;top:63px" width="5" height="6" viewBox="0 0 5 6"><rect x="0.5" y="0.5" width="4" height="5" fill="none" stroke="#222"/></svg>
<svg class="a" style="left:660px;top:60px" width="9" height="11" viewBox="0 0 9 11"><rect x="0.5" y="0.5" width="8" height="6" fill="#2a7ad8" stroke="#245"/><rect x="3" y="7" width="3" height="2" fill="#666"/><rect x="0" y="9" width="9" height="2" fill="#d0a030"/></svg>
<svg class="a" style="left:672px;top:60px" width="10" height="11" viewBox="0 0 10 11"><path d="M1 1L5 5" stroke="#333" stroke-width="1.4"/><path d="M4 4L9 9L6 10L3 6Z" fill="#f0e020" stroke="#a0a010" stroke-width=".6"/></svg>
<div class="a" style="left:685px;top:60px;width:1px;height:12px;background:#cfcfcf"></div>
<svg class="a" style="left:688px;top:62px" width="8" height="7" viewBox="0 0 8 7"><rect x="0.5" y="0.5" width="7" height="6" fill="#fff" stroke="#333"/></svg>
<svg class="a" style="left:699px;top:62px" width="10" height="7" viewBox="0 0 10 7"><text x="0" y="6.5" font-size="6.5" font-family="Liberation Sans" font-weight="bold" fill="#111">NO</text></svg>
<svg class="a" style="left:711px;top:60px" width="10" height="11" viewBox="0 0 10 11"><circle cx="5" cy="4.5" r="4" fill="#2a6ac8"/><path d="M2 3Q5 1 8 4" stroke="#6ad" fill="none"/><rect x="1" y="9" width="8" height="2" fill="#c0a040"/></svg>
<div class="a" style="left:720px;top:62px;width:3px;height:8px;background:#555"></div>
<div class="a" style="left:726px;top:60px;width:1px;height:12px;background:#cfcfcf"></div>
<svg class="a" style="left:729px;top:60px" width="9" height="11" viewBox="0 0 9 11"><path d="M1 2Q3 0 4 4T8 9" fill="none" stroke="#333"/><text x="4" y="9" font-size="5" font-family="Liberation Sans" fill="#333">b</text></svg>
<svg class="a" style="left:741px;top:60px" width="10" height="11" viewBox="0 0 10 11"><circle cx="5" cy="5.5" r="4.6" fill="#2a4ad0"/><path d="M1 6Q3 4 5 6T9 6V8Q5 11 1 8Z" fill="#40d040"/><path d="M2 4Q5 2 8 4" stroke="#fff" fill="none"/></svg>
<div class="a" style="left:755px;top:60px;width:1px;height:12px;background:#cfcfcf"></div>
<svg class="a" style="left:757px;top:61px" width="10" height="10" viewBox="0 0 10 10"><rect x="0.5" y="0.5" width="9" height="9" rx="2" fill="#555" stroke="#333"/><path d="M2 3H8M2 5H8M2 7H8" stroke="#999"/></svg>
<div class="a" style="left:771px;top:60px;width:1px;height:12px;background:#cfcfcf"></div>
<svg class="a" style="left:772px;top:60px" width="11" height="11" viewBox="0 0 11 11"><circle cx="5.5" cy="5.5" r="5" fill="#d83030" stroke="#902020" stroke-width=".6"/><path d="M3.5 3.5L7.5 7.5M7.5 3.5L3.5 7.5" stroke="#fff" stroke-width="1.4"/></svg>
<div class="a" style="left:786px;top:60px;width:1px;height:12px;background:#cfcfcf"></div>
<div class="t" style="left:789px;top:62px;font-size:7px;line-height:8px;color:#222;">制图工具</div>
<svg class="a" style="left:818px;top:65px" width="4" height="3" viewBox="0 0 4 3"><path d="M0 0 L4 0 L2 2.5Z" fill="#222"/></svg>
<div class="a" style="left:825px;top:60px;width:1px;height:12px;background:#cfcfcf"></div>
<div class="t" style="left:828px;top:62px;font-size:7px;line-height:8px;color:#222;">图形裁剪</div>
<svg class="a" style="left:857px;top:65px" width="4" height="3" viewBox="0 0 4 3"><path d="M0 0 L4 0 L2 2.5Z" fill="#222"/></svg>
<svg class="a" style="left:862px;top:61px" width="11" height="9" viewBox="0 0 11 9"><path d="M1 8.5H10V6Q10 3 7 3Q6 0.5 4 1.5Q1.5 2 2 5Q0.5 6 1 8.5Z" fill="#fff" stroke="#3a8ad8" stroke-width="1"/></svg>
<div class="a" style="left:875px;top:60px;width:1px;height:12px;background:#cfcfcf"></div>
<svg class="a" style="left:878px;top:61px" width="8" height="9" viewBox="0 0 8 9"><rect x="0.5" y="0.5" width="7" height="8" fill="#111"/><rect x="2" y="1" width="4" height="3" fill="#f0f000"/><rect x="2" y="6" width="4" height="2" fill="#ccc"/></svg>
<svg class="a" style="left:889px;top:61px" width="10" height="10" viewBox="0 0 10 10"><rect x="0.5" y="1.5" width="7" height="8" fill="#eee" stroke="#c6c6c6"/><path d="M4 7L9 1" stroke="#c6c6c6"/></svg>
<div class="a" style="left:903px;top:60px;width:1px;height:12px;background:#cfcfcf"></div>
<svg class="a" style="left:907px;top:61px" width="9" height="10" viewBox="0 0 9 10"><rect x="0.5" y="0.5" width="8" height="9" fill="#fff" stroke="#555"/></svg>
<svg class="a" style="left:920px;top:61px" width="9" height="10" viewBox="0 0 9 10"><path d="M0.5 9.5H8.5L4.5 2Z" fill="none" stroke="#c6c6c6"/><circle cx="4.5" cy="6" r="2" fill="none" stroke="#c6c6c6"/></svg>
<svg class="a" style="left:934px;top:60px" width="8" height="11" viewBox="0 0 8 11"><path d="M1 5L3 10L7 1" fill="none" stroke="#c6c6c6" stroke-width="1.2"/></svg>
<svg class="a" style="left:945px;top:62px" width="10" height="7" viewBox="0 0 10 7"><rect x="0.5" y="0.5" width="9" height="6" fill="#f4f4f4" stroke="#c6c6c6"/><path d="M5 0V7" stroke="#c6c6c6"/></svg>
<div class="a" style="left:958px;top:60px;width:1px;height:12px;background:#cfcfcf"></div>
<div class="t" style="left:961px;top:62px;font-size:7px;line-height:8px;color:#222;">数据处理</div>
<svg class="a" style="left:990px;top:65px" width="4" height="3" viewBox="0 0 4 3"><path d="M0 0 L4 0 L2 2.5Z" fill="#222"/></svg>
<div class="a" style="left:996px;top:60px;width:1px;height:12px;background:#cfcfcf"></div>
<div class="t" style="left:999px;top:62px;font-size:7px;line-height:8px;color:#222;">数据空间分析</div>
<svg class="a" style="left:1042px;top:65px" width="4" height="3" viewBox="0 0 4 3"><path d="M0 0 L4 0 L2 2.5Z" fill="#222"/></svg>
<div class="a" style="left:1049px;top:60px;width:1px;height:12px;background:#cfcfcf"></div>
<div class="t" style="left:1052px;top:62px;font-size:7px;line-height:8px;color:#222;">其他</div>
<svg class="a" style="left:1068px;top:65px" width="4" height="3" viewBox="0 0 4 3"><path d="M0 0 L4 0 L2 2.5Z" fill="#222"/></svg>
<div class="a" style="left:1075px;top:60px;width:5px;height:13px;background:linear-gradient(#e4e4e4,#c9c9c9)"></div>
<svg class="a" style="left:1075px;top:68px" width="5" height="4" viewBox="0 0 5 4"><rect x="1" y="0" width="3" height="1" fill="#333"/><path d="M1 2 L4 2 L2.5 4Z" fill="#333"/></svg>
<div class="a" style="left:0px;top:73px;width:162px;height:484px;background:#f0f0f0"></div>
<div class="a" style="left:0px;top:74px;width:160px;height:12px;background:linear-gradient(#bcd1ea,#abc4e2)"></div>
<div class="t" style="left:2px;top:76px;font-size:7px;line-height:8px;color:#1e2a3a;">内容列表</div>
<svg class="a" style="left:142px;top:76px" width="6" height="8" viewBox="0 0 6 8"><rect x="1" y="0.5" width="4" height="5" fill="none" stroke="#222"/><rect x="1" y="3" width="4" height="1" fill="#222"/><path d="M3 6V8" stroke="#222"/></svg>
<svg class="a" style="left:151px;top:77px" width="6" height="6" viewBox="0 0 6 6"><path d="M0.5 0.5L5.5 5.5M5.5 0.5L0.5 5.5" stroke="#111" stroke-width="1.1"/></svg>
<div class="a" style="left:0px;top:86px;width:160px;height:14px;background:#f4f4f4"></div>
<div class="a" style="left:2px;top:87px;width:13px;height:13px;background:#dcebfa;border:1px solid #4a9ae6"></div>
<svg class="a" style="left:4px;top:89px" width="10" height="9" viewBox="0 0 10 9"><circle cx="2" cy="2" r="1.8" fill="#f0b030"/><circle cx="6" cy="5" r="1.8" fill="#f0b030"/><circle cx="6" cy="8" r="1.5" fill="#f0b030"/><path d="M8 5H10M8 8H10" stroke="#4a7ab0"/></svg>
<svg class="a" style="left:17px;top:88px" width="9" height="11" viewBox="0 0 9 11"><rect x="1.5" y="0.5" width="6" height="7" rx="1.5" fill="#d8e0ec" stroke="#6a7a90"/><path d="M0 6L4.5 10.5L9 6Z" fill="#f0c040"/></svg>
<svg class="a" style="left:29px;top:88px" width="11" height="10" viewBox="0 0 11 10"><path d="M5.5 0.5L10.5 4L5.5 7.5L0.5 4Z" fill="#f2c860" stroke="#a88030"/><path d="M0.5 6L5.5 9.5L10.5 6" fill="none" stroke="#bbb"/></svg>
<svg class="a" style="left:41px;top:88px" width="10" height="11" viewBox="0 0 10 11"><rect x="1.5" y="0.5" width="7" height="7" fill="#fff" stroke="#555"/><rect x="2" y="1" width="3" height="6" fill="#20b0e0"/><path d="M0 6L5 10.5L10 6Z" fill="#f0c040"/></svg>
<div class="a" style="left:54px;top:89px;width:1px;height:8px;background:#cfcfcf"></div>
<svg class="a" style="left:57px;top:88px" width="10" height="10" viewBox="0 0 10 10"><rect x="0.5" y="0.5" width="9" height="9" fill="#f4f7fb" stroke="#777"/><path d="M2 3H3M5 3H8M2 6H3M5 6H8" stroke="#555"/></svg>
<div class="a" style="left:1px;top:100px;width:159px;height:229px;background:#fff;border:1px solid #c9c9c9"></div>
<svg class="a" style="left:5px;top:105px" width="6" height="6" viewBox="0 0 6 6"><rect x="0.5" y="0.5" width="5" height="5" fill="#f4f4f4" stroke="#9a9a9a"/><path d="M1.5 3H4.5" stroke="#555"/></svg>
<svg class="a" style="left:14px;top:104px" width="8" height="7" viewBox="0 0 8 7"><path d="M2 0.5H7.5V5L6 6.5H0.5V2Z" fill="#e8c070" stroke="#b08040" stroke-width=".8"/><path d="M0.5 2H6V6.5M6 2L7.5 0.5" fill="none" stroke="#b08040" stroke-width=".8"/></svg>
<div class="t" style="left:25px;top:103.5px;font-size:7px;line-height:8px;color:#111;"><b>图层</b></div>
<svg class="a" style="left:16px;top:117px" width="6" height="6" viewBox="0 0 6 6"><rect x="0.5" y="0.5" width="5" height="5" fill="#f4f4f4" stroke="#bbb"/><path d="M1.5 3H4.5" stroke="#555"/></svg>
<svg class="a" style="left:25px;top:116px" width="7" height="7" viewBox="0 0 7 7"><rect x="0.5" y="0.5" width="6" height="6" fill="#fff" stroke="#333"/><path d="M1.5 3.5L3 5L5.5 1.5" fill="none" stroke="#111" stroke-width="1.1"/></svg>
<div class="t" style="left:36px;top:115px;font-size:7px;line-height:8px;color:#111;">测试_单色龙_P</div>
<svg class="a" style="left:34px;top:127px" width="4" height="4" viewBox="0 0 4 4"><path d="M2 0L4 2L2 4L0 2Z" fill="#ffe000" stroke="#8a7a00" stroke-width=".5"/></svg>
<div class="a" style="left:43px;top:124px;width:4px;height:10px;background:#1f86e0;border:1px solid #0d3d70"></div>
<svg class="a" style="left:16px;top:140px" width="6" height="6" viewBox="0 0 6 6"><rect x="0.5" y="0.5" width="5" height="5" fill="#f4f4f4" stroke="#bbb"/><path d="M1.5 3H4.5" stroke="#555"/></svg>
<svg class="a" style="left:25px;top:139px" width="7" height="7" viewBox="0 0 7 7"><rect x="0.5" y="0.5" width="6" height="6" fill="#fff" stroke="#333"/></svg>
<div class="t" style="left:36px;top:138px;font-size:7px;line-height:8px;color:#111;">测试_单色龙_L</div>
<div class="a" style="left:34px;top:153px;width:8px;height:1px;background:#c050d0"></div>
<svg class="a" style="left:16px;top:162px" width="6" height="6" viewBox="0 0 6 6"><rect x="0.5" y="0.5" width="5" height="5" fill="#f4f4f4" stroke="#bbb"/><path d="M1.5 3H4.5" stroke="#555"/></svg>
<svg class="a" style="left:25px;top:161px" width="7" height="7" viewBox="0 0 7 7"><rect x="0.5" y="0.5" width="6" height="6" fill="#fff" stroke="#333"/></svg>
<div class="t" style="left:36px;top:160px;font-size:7px;line-height:8px;color:#111;">测试_简化龙_R</div>
<svg class="a" style="left:33px;top:172px" width="10" height="7" viewBox="0 0 10 7"><rect x="1" y="1" width="8" height="5" fill="#fff" stroke="#e00000" stroke-width="1.6"/></svg>
<div class="a" style="left:0px;top:331px;width:160px;height:13px;background:linear-gradient(#cfdeef,#bfd2e8)"></div>
<div class="t" style="left:2px;top:334px;font-size:7.3px;line-height:8.3px;color:#2a3340;">ArcToolbox</div>
<svg class="a" style="left:143px;top:334px" width="6" height="8" viewBox="0 0 6 8"><rect x="1" y="0.5" width="4" height="5" fill="none" stroke="#222"/><rect x="1" y="3" width="4" height="1" fill="#222"/><path d="M3 6V8" stroke="#222"/></svg>
<svg class="a" style="left:152px;top:335px" width="6" height="6" viewBox="0 0 6 6"><path d="M0.5 0.5L5.5 5.5M5.5 0.5L0.5 5.5" stroke="#111" stroke-width="1.1"/></svg>
<div class="a" style="left:1px;top:344px;width:159px;height:202px;background:#fff;border:1px solid #b9c3cf"></div>
<div class="a" style="left:150px;top:345px;width:9px;height:200px;background:#f0f0f0"></div>
<svg class="a" style="left:152px;top:349px" width="6" height="4" viewBox="0 0 6 4"><path d="M0.5 3.5L3 1L5.5 3.5" fill="none" stroke="#555"/></svg>
<svg class="a" style="left:152px;top:538px" width="6" height="4" viewBox="0 0 6 4"><path d="M0.5 0.5L3 3L5.5 0.5" fill="none" stroke="#555"/></svg>
<div class="a" style="left:151px;top:447px;width:7px;height:34px;background:#c2c2c2"></div>
<svg class="a" style="left:35px;top:344px" width="10" height="10" viewBox="0 0 10 10"><path d="M1 2.5L4 0.5L6.5 2.5L5 4Z" fill="#555"/><path d="M4 3L9 9.5" stroke="#b09a78" stroke-width="1.6"/></svg>
<div class="t" style="left:47px;top:345.5px;font-size:7px;line-height:8px;color:#222;">原点夹角距离定义线</div>
<svg class="a" style="left:35px;top:355px" width="10" height="10" viewBox="0 0 10 10"><path d="M1 2.5L4 0.5L6.5 2.5L5 4Z" fill="#555"/><path d="M4 3L9 9.5" stroke="#b09a78" stroke-width="1.6"/></svg>
<div class="t" style="left:47px;top:356.5px;font-size:7px;line-height:8px;color:#222;">取消线分割</div>
<svg class="a" style="left:35px;top:366px" width="10" height="10" viewBox="0 0 10 10"><path d="M1 2.5L4 0.5L6.5 2.5L5 4Z" fill="#555"/><path d="M4 3L9 9.5" stroke="#b09a78" stroke-width="1.6"/></svg>
<div class="t" style="left:47px;top:367.5px;font-size:7px;line-height:8px;color:#222;">在折点处分割线</div>
<svg class="a" style="left:35px;top:378px" width="10" height="10" viewBox="0 0 10 10"><path d="M1 2.5L4 0.5L6.5 2.5L5 4Z" fill="#555"/><path d="M4 3L9 9.5" stroke="#b09a78" stroke-width="1.6"/></svg>
<div class="t" style="left:47px;top:379.5px;font-size:7px;line-height:8px;color:#222;">在点处分割线</div>
<svg class="a" style="left:35px;top:389px" width="10" height="10" viewBox="0 0 10 10"><path d="M1 2.5L4 0.5L6.5 2.5L5 4Z" fill="#555"/><path d="M4 3L9 9.5" stroke="#b09a78" stroke-width="1.6"/></svg>
<div class="t" style="left:47px;top:390.5px;font-size:7px;line-height:8px;color:#222;">复制要素</div>
<svg class="a" style="left:35px;top:400px" width="10" height="10" viewBox="0 0 10 10"><path d="M1 2.5L4 0.5L6.5 2.5L5 4Z" fill="#555"/><path d="M4 3L9 9.5" stroke="#b09a78" stroke-width="1.6"/></svg>
<div class="t" style="left:47px;top:401.5px;font-size:7px;line-height:8px;color:#222;">多部件至单部件</div>
<svg class="a" style="left:35px;top:411px" width="10" height="10" viewBox="0 0 10 10"><path d="M1 2.5L4 0.5L6.5 2.5L5 4Z" fill="#555"/><path d="M4 3L9 9.5" stroke="#b09a78" stroke-width="1.6"/></svg>
<div class="t" style="left:47px;top:412.5px;font-size:7px;line-height:8px;color:#222;">最小边界几何</div>
<svg class="a" style="left:35px;top:423px" width="10" height="10" viewBox="0 0 10 10"><path d="M1 2.5L4 0.5L6.5 2.5L5 4Z" fill="#555"/><path d="M4 3L9 9.5" stroke="#b09a78" stroke-width="1.6"/></svg>
<div class="t" style="left:47px;top:424.5px;font-size:7px;line-height:8px;color:#222;">检查几何</div>
<svg class="a" style="left:35px;top:434px" width="10" height="10" viewBox="0 0 10 10"><path d="M1 2.5L4 0.5L6.5 2.5L5 4Z" fill="#555"/><path d="M4 3L9 9.5" stroke="#b09a78" stroke-width="1.6"/></svg>
<div class="t" style="left:47px;top:435.5px;font-size:7px;line-height:8px;color:#222;">添加 XY 坐标</div>
<svg class="a" style="left:35px;top:445px" width="10" height="10" viewBox="0 0 10 10"><path d="M2 1H8L7 3H5L4 6H7L6 9H1L2 7H3L4 4H2Z" fill="#2a82d0"/></svg>
<div class="t" style="left:47px;top:446.5px;font-size:7px;line-height:8px;color:#222;">添加几何属性</div>
<svg class="a" style="left:35px;top:456px" width="10" height="10" viewBox="0 0 10 10"><path d="M2 1H8L7 3H5L4 6H7L6 9H1L2 7H3L4 4H2Z" fill="#2a82d0"/></svg>
<div class="a" style="left:46px;top:456px;width:28px;height:10px;background:#eaeaea"></div>
<div class="t" style="left:47px;top:457.5px;font-size:7px;line-height:8px;color:#222;">点集转线</div>
<svg class="a" style="left:35px;top:468px" width="10" height="10" viewBox="0 0 10 10"><path d="M1 2.5L4 0.5L6.5 2.5L5 4Z" fill="#555"/><path d="M4 3L9 9.5" stroke="#b09a78" stroke-width="1.6"/></svg>
<div class="t" style="left:47px;top:469.5px;font-size:7px;line-height:8px;color:#222;">表转椭圆</div>
<svg class="a" style="left:35px;top:479px" width="10" height="10" viewBox="0 0 10 10"><path d="M1 2.5L4 0.5L6.5 2.5L5 4Z" fill="#555"/><path d="M4 3L9 9.5" stroke="#b09a78" stroke-width="1.6"/></svg>
<div class="t" style="left:47px;top:480.5px;font-size:7px;line-height:8px;color:#222;">要素包络矩形转面</div>
<svg class="a" style="left:35px;top:490px" width="10" height="10" viewBox="0 0 10 10"><path d="M1 2.5L4 0.5L6.5 2.5L5 4Z" fill="#555"/><path d="M4 3L9 9.5" stroke="#b09a78" stroke-width="1.6"/></svg>
<div class="t" style="left:47px;top:491.5px;font-size:7px;line-height:8px;color:#222;">要素折点转点</div>
<svg class="a" style="left:35px;top:501px" width="10" height="10" viewBox="0 0 10 10"><path d="M1 2.5L4 0.5L6.5 2.5L5 4Z" fill="#555"/><path d="M4 3L9 9.5" stroke="#b09a78" stroke-width="1.6"/></svg>
<div class="t" style="left:47px;top:502.5px;font-size:7px;line-height:8px;color:#222;">要素转点</div>
<svg class="a" style="left:35px;top:513px" width="10" height="10" viewBox="0 0 10 10"><path d="M1 2.5L4 0.5L6.5 2.5L5 4Z" fill="#555"/><path d="M4 3L9 9.5" stroke="#b09a78" stroke-width="1.6"/></svg>
<div class="t" style="left:47px;top:514.5px;font-size:7px;line-height:8px;color:#222;">要素转线</div>
<svg class="a" style="left:35px;top:524px" width="10" height="10" viewBox="0 0 10 10"><path d="M1 2.5L4 0.5L6.5 2.5L5 4Z" fill="#555"/><path d="M4 3L9 9.5" stroke="#b09a78" stroke-width="1.6"/></svg>
<div class="t" style="left:47px;top:525.5px;font-size:7px;line-height:8px;color:#222;">要素转面</div>
<svg class="a" style="left:35px;top:535px" width="10" height="10" viewBox="0 0 10 10"><path d="M1 2.5L4 0.5L6.5 2.5L5 4Z" fill="#555"/><path d="M4 3L9 9.5" stroke="#b09a78" stroke-width="1.6"/></svg>
<div class="t" style="left:47px;top:536.5px;font-size:7px;line-height:8px;color:#222;">调整 3D Z 值</div>
<div class="a" style="left:0px;top:545px;width:161px;height:12px;background:#f0f0f0"></div>
<div class="a" style="left:2px;top:545px;width:29px;height:11px;background:#ececec;border:1px solid #c8c8c8;border-top:none"></div>
<svg class="a" style="left:4px;top:547px" width="8" height="8" viewBox="0 0 8 8"><rect x="0.5" y="0.5" width="7" height="7" fill="#fff" stroke="#3a5a8a"/><path d="M2 6L6 2" stroke="#888"/></svg>
<div class="t" style="left:14px;top:547px;font-size:7px;line-height:8px;color:#999;">结果</div>
<div class="a" style="left:31px;top:545px;width:54px;height:12px;background:#fff;border:1px solid #c8c8c8;border-top:none"></div>
<svg class="a" style="left:33px;top:547px" width="9" height="8" viewBox="0 0 9 8"><rect x="0.5" y="1.5" width="8" height="6" fill="#c83030" stroke="#802020"/><rect x="2" y="0" width="5" height="2" fill="#555"/></svg>
<div class="t" style="left:44px;top:546.5px;font-size:7.6px;line-height:8.6px;color:#222;">ArcToolbox</div>
<div class="a" style="left:85px;top:545px;width:29px;height:11px;background:#ececec;border:1px solid #c8c8c8;border-top:none"></div>
<svg class="a" style="left:87px;top:547px" width="9" height="8" viewBox="0 0 9 8"><rect x="0.5" y="0.5" width="8" height="7" fill="#dde8f4" stroke="#3a5a8a"/><circle cx="4.5" cy="5" r="2.5" fill="#2a5ad0"/></svg>
<div class="t" style="left:97px;top:547px;font-size:7px;line-height:8px;color:#999;">识别</div>
<div class="a" style="left:162px;top:74px;width:905px;height:483px;background:#6a6a6a"></div>
<div class="a" style="left:163px;top:75px;width:904px;height:481px;background:#000"></div>
<div class="a" style="left:1067px;top:73px;width:13px;height:484px;background:#f0f0f0"></div>
<div class="a" style="left:1067px;top:75px;width:1px;height:481px;background:#fafafa"></div>
<div class="a" style="left:1069px;top:77px;width:11px;height:39px;background:#f7f7f7;border:1px solid #c8c8c8;border-right:none"></div>
<svg class="a" style="left:1070px;top:78px" width="9" height="9" viewBox="0 0 9 9"><rect x="0.5" y="0.5" width="8" height="8" fill="#e8eef6" stroke="#5a6a80"/><rect x="1.5" y="2.5" width="6" height="5" fill="#2a9a7a"/></svg>
<div class="a" style="left:1069px;top:118px;width:11px;height:28px;background:#f7f7f7;border:1px solid #c8c8c8;border-right:none"></div>
<svg class="a" style="left:1070px;top:119px" width="9" height="9" viewBox="0 0 9 9"><rect x="0.5" y="0.5" width="8" height="8" fill="#e8eef6" stroke="#5a6a80"/><rect x="1.5" y="2.5" width="6" height="5" fill="#9cc4ea"/></svg>
<div class="a" style="left:1069px;top:148px;width:11px;height:28px;background:#f7f7f7;border:1px solid #c8c8c8;border-right:none"></div>
<svg class="a" style="left:1070px;top:149px" width="9" height="9" viewBox="0 0 9 9"><rect x="0.5" y="0.5" width="8" height="8" fill="#e8eef6" stroke="#5a6a80"/><rect x="1.5" y="2.5" width="6" height="5" fill="#e0b020"/></svg>
<div class="a" style="left:1069px;top:178px;width:11px;height:27px;background:#f7f7f7;border:1px solid #c8c8c8;border-right:none"></div>
<svg class="a" style="left:1070px;top:179px" width="9" height="9" viewBox="0 0 9 9"><rect x="0.5" y="0.5" width="8" height="8" fill="#e8eef6" stroke="#5a6a80"/><rect x="1.5" y="2.5" width="6" height="5" fill="#3a7ac8"/></svg>
<div class="a" style="left:1069px;top:206px;width:11px;height:42px;background:#f7f7f7;border:1px solid #c8c8c8;border-right:none"></div>
<svg class="a" style="left:1070px;top:207px" width="9" height="9" viewBox="0 0 9 9"><rect x="0.5" y="0.5" width="8" height="8" fill="#e8eef6" stroke="#5a6a80"/><rect x="1.5" y="2.5" width="6" height="5" fill="#3a9a50"/></svg>
<div class="t" style="left:1070px;top:88px;width:9px;font-size:6.6px;line-height:9px;color:#444;writing-mode:vertical-rl;text-orientation:sideways">图像分析</div>
<div class="t" style="left:1070px;top:130px;width:9px;font-size:6.6px;line-height:9px;color:#444;writing-mode:vertical-rl;text-orientation:sideways">属性</div>
<div class="t" style="left:1070px;top:160px;width:9px;font-size:6.6px;line-height:9px;color:#444;writing-mode:vertical-rl;text-orientation:sideways">目录</div>
<div class="t" style="left:1070px;top:189px;width:9px;font-size:6.6px;line-height:9px;color:#444;writing-mode:vertical-rl;text-orientation:sideways">搜索</div>
<div class="t" style="left:1070px;top:218px;width:9px;font-size:6.6px;line-height:9px;color:#444;writing-mode:vertical-rl;text-orientation:sideways">创建要素</div>
<div class="a" style="left:0px;top:557px;width:1080px;height:16px;background:#f0f0f0"></div>
<div class="a" style="left:0px;top:558px;width:606px;height:14px;background:linear-gradient(#fbfbfb,#f3f3f3)"></div>
<svg class="a" style="left:3px;top:559px" width="1" height="12" viewBox="0 0 1 12"><rect x="0" y="0" width="1" height="1" fill="#9a9a9a"/><rect x="0" y="2" width="1" height="1" fill="#9a9a9a"/><rect x="0" y="4" width="1" height="1" fill="#9a9a9a"/><rect x="0" y="6" width="1" height="1" fill="#9a9a9a"/><rect x="0" y="8" width="1" height="1" fill="#9a9a9a"/><rect x="0" y="10" width="1" height="1" fill="#9a9a9a"/></svg>
<div class="t" style="left:8px;top:561px;font-size:7px;line-height:8px;color:#222;">绘制(D)</div>
<svg class="a" style="left:33px;top:564px" width="4" height="3" viewBox="0 0 4 3"><path d="M0 0 L4 0 L2 2.5Z" fill="#222"/></svg>
<svg class="a" style="left:41px;top:560px" width="7" height="10" viewBox="0 0 7 10"><path d="M0.5 0.5V9L2.5 7L4.5 10L6 9L4 6H7Z" fill="#111"/></svg>
<svg class="a" style="left:51px;top:560px" width="10" height="10" viewBox="0 0 10 10"><circle cx="5" cy="5" r="4" fill="none" stroke="#c6c6c6" stroke-dasharray="1.5 1"/><circle cx="5" cy="5" r="1" fill="#c6c6c6"/></svg>
<svg class="a" style="left:65px;top:560px" width="8" height="10" viewBox="0 0 8 10"><rect x="0.5" y="0.5" width="7" height="9" fill="#eee" stroke="#c6c6c6"/></svg>
<div class="a" style="left:76px;top:559px;width:1px;height:12px;background:#cfcfcf"></div>
<svg class="a" style="left:80px;top:560px" width="8" height="9" viewBox="0 0 8 9"><rect x="0.5" y="0.5" width="7" height="8" fill="#fff" stroke="#333"/></svg>
<svg class="a" style="left:92px;top:564px" width="4" height="3" viewBox="0 0 4 3"><path d="M0 0 L4 0 L2 2.5Z" fill="#222"/></svg>
<svg class="a" style="left:98px;top:559px" width="9" height="11" viewBox="0 0 9 11"><text x="0" y="10" font-size="11" font-family="Liberation Serif" font-weight="bold" fill="#222">A</text></svg>
<svg class="a" style="left:110px;top:564px" width="4" height="3" viewBox="0 0 4 3"><path d="M0 0 L4 0 L2 2.5Z" fill="#222"/></svg>
<svg class="a" style="left:117px;top:560px" width="9" height="10" viewBox="0 0 9 10"><path d="M1 1H8V8H1Z" fill="none" stroke="#c6c6c6" stroke-dasharray="2 1"/></svg>
<div class="a" style="left:129px;top:559px;width:1px;height:12px;background:#cfcfcf"></div>
<div class="a" style="left:131px;top:558px;width:96px;height:13px;background:#fff;border:1px solid #999"></div>
<svg class="a" style="left:133px;top:559px" width="9" height="11" viewBox="0 0 9 11"><rect x="0.5" y="0.5" width="8" height="10" fill="#cfe0f4" stroke="#6a8ab0"/><ellipse cx="4.5" cy="5.5" rx="2.2" ry="3.6" fill="#1a8a3a" transform="rotate(20 4.5 5.5)"/></svg>
<div class="t" style="left:143px;top:560.5px;font-size:7px;line-height:8px;color:#111;">宋体</div>
<svg class="a" style="left:219px;top:562px" width="6" height="4" viewBox="0 0 6 4"><path d="M0.5 0.5L3 3L5.5 0.5" fill="none" stroke="#444"/></svg>
<div class="a" style="left:227px;top:558px;width:26px;height:13px;background:#fff;border:1px solid #999"></div>
<div class="t" style="left:229px;top:560.5px;font-size:7px;line-height:8px;color:#111;">10</div>
<svg class="a" style="left:246px;top:562px" width="6" height="4" viewBox="0 0 6 4"><path d="M0.5 0.5L3 3L5.5 0.5" fill="none" stroke="#444"/></svg>
<div class="t" style="left:257px;top:560.5px;font-size:7.5px;line-height:8.5px;color:#222;font-family:Liberation Serif"><b>B</b></div>
<div class="t" style="left:270px;top:560.5px;font-size:7.5px;line-height:8.5px;color:#222;font-family:Liberation Serif"><i><b>I</b></i></div>
<div class="t" style="left:281px;top:560.5px;font-size:7.5px;line-height:8.5px;color:#222;font-family:Liberation Serif"><b><u>U</u></b></div>
<div class="a" style="left:292px;top:559px;width:1px;height:12px;background:#cfcfcf"></div>
<svg class="a" style="left:295px;top:559px" width="11" height="12" viewBox="0 0 11 12"><text x="1.5" y="8" font-size="9" font-family="Liberation Serif" font-weight="bold" fill="#111">A</text><rect x="0" y="10" width="11" height="2" fill="#111"/></svg>
<svg class="a" style="left:309px;top:564px" width="4" height="3" viewBox="0 0 4 3"><path d="M0 0 L4 0 L2 2.5Z" fill="#222"/></svg>
<svg class="a" style="left:316px;top:559px" width="11" height="12" viewBox="0 0 11 12"><path d="M3 2L6 0.5L9 5L5 8Z" fill="#fff" stroke="#555"/><rect x="0" y="10" width="11" height="2" fill="#f4f0a0"/></svg>
<svg class="a" style="left:331px;top:564px" width="4" height="3" viewBox="0 0 4 3"><path d="M0 0 L4 0 L2 2.5Z" fill="#222"/></svg>
<svg class="a" style="left:338px;top:559px" width="11" height="12" viewBox="0 0 11 12"><path d="M2 8L8 2L9.5 3.5L3.5 9.5Z" fill="#fff" stroke="#444"/><rect x="0" y="10" width="11" height="2" fill="#111"/></svg>
<svg class="a" style="left:353px;top:564px" width="4" height="3" viewBox="0 0 4 3"><path d="M0 0 L4 0 L2 2.5Z" fill="#222"/></svg>
<svg class="a" style="left:359px;top:559px" width="11" height="12" viewBox="0 0 11 12"><circle cx="5.5" cy="4" r="1.3" fill="#1a2ad0"/><rect x="0" y="10" width="11" height="2" fill="#40d030"/></svg>
<svg class="a" style="left:374px;top:564px" width="4" height="3" viewBox="0 0 4 3"><path d="M0 0 L4 0 L2 2.5Z" fill="#222"/></svg>
<div class="a" style="left:380px;top:558px;width:6px;height:14px;background:linear-gradient(#e4e4e4,#c9c9c9)"></div>
<svg class="a" style="left:380px;top:567px" width="6" height="4" viewBox="0 0 6 4"><rect x="1" y="0" width="4" height="1" fill="#333"/><path d="M1 2 L5 2 L3.0 4Z" fill="#333"/></svg>
<svg class="a" style="left:389px;top:559px" width="1" height="12" viewBox="0 0 1 12"><rect x="0" y="0" width="1" height="1" fill="#9a9a9a"/><rect x="0" y="2" width="1" height="1" fill="#9a9a9a"/><rect x="0" y="4" width="1" height="1" fill="#9a9a9a"/><rect x="0" y="6" width="1" height="1" fill="#9a9a9a"/><rect x="0" y="8" width="1" height="1" fill="#9a9a9a"/><rect x="0" y="10" width="1" height="1" fill="#9a9a9a"/></svg>
<svg class="a" style="left:393px;top:560px" width="9" height="9" viewBox="0 0 9 9"><rect x="0.5" y="2.5" width="8" height="6" fill="#d8d0b0" stroke="#777"/><path d="M5 0L8 3" stroke="#c08020" stroke-width="1.4"/></svg>
<svg class="a" style="left:403px;top:560px" width="9" height="10" viewBox="0 0 9 10"><circle cx="4.5" cy="5" r="4" fill="none" stroke="#c6c6c6"/><path d="M2 5H7" stroke="#c6c6c6"/></svg>
<svg class="a" style="left:414px;top:560px" width="9" height="10" viewBox="0 0 9 10"><rect x="0.5" y="0.5" width="8" height="9" fill="#ddd" stroke="#c6c6c6"/></svg>
<div class="a" style="left:428px;top:559px;width:1px;height:12px;background:#cfcfcf"></div>
<svg class="a" style="left:436px;top:561px" width="7" height="8" viewBox="0 0 7 8"><rect x="0" y="0" width="1.2" height="8" fill="#c6c6c6"/><path d="M7 0V8L2 4Z" fill="#c6c6c6"/></svg>
<svg class="a" style="left:448px;top:561px" width="6" height="8" viewBox="0 0 6 8"><path d="M5 0V8L0 4Z" fill="#c6c6c6"/></svg>
<div class="a" style="left:457px;top:558px;width:70px;height:13px;background:#f3f3f3;border:1px solid #cbcbcb"></div>
<div class="t" style="left:460px;top:560.5px;font-size:7px;line-height:8px;color:#888;">显示名称</div>
<div class="a" style="left:505px;top:559px;width:1px;height:11px;background:#f3f3f3"></div>
<svg class="a" style="left:519px;top:562px" width="6" height="4" viewBox="0 0 6 4"><path d="M0.5 0.5L3 3L5.5 0.5" fill="none" stroke="#999"/></svg>
<svg class="a" style="left:532px;top:561px" width="6" height="8" viewBox="0 0 6 8"><path d="M0 0V8L5 4Z" fill="#c6c6c6"/></svg>
<svg class="a" style="left:544px;top:561px" width="7" height="8" viewBox="0 0 7 8"><path d="M0 0V8L5 4Z" fill="#c6c6c6"/><rect x="5.8" y="0" width="1.2" height="8" fill="#c6c6c6"/></svg>
<div class="a" style="left:553px;top:559px;width:1px;height:12px;background:#cfcfcf"></div>
<div class="t" style="left:558px;top:560.5px;font-size:7px;line-height:8px;color:#222;">页面文本(P)</div>
<svg class="a" style="left:595px;top:564px" width="4" height="3" viewBox="0 0 4 3"><path d="M0 0 L4 0 L2 2.5Z" fill="#222"/></svg>
<div class="a" style="left:601px;top:559px;width:6px;height:14px;background:linear-gradient(#e4e4e4,#c9c9c9)"></div>
<svg class="a" style="left:601px;top:568px" width="6" height="4" viewBox="0 0 6 4"><rect x="1" y="0" width="4" height="1" fill="#333"/><path d="M1 2 L5 2 L3.0 4Z" fill="#333"/></svg>
<div class="a" style="left:609px;top:558px;width:466px;height:14px;background:linear-gradient(#fbfbfb,#f3f3f3)"></div>
<svg class="a" style="left:613px;top:559px" width="1" height="12" viewBox="0 0 1 12"><rect x="0" y="0" width="1" height="1" fill="#9a9a9a"/><rect x="0" y="2" width="1" height="1" fill="#9a9a9a"/><rect x="0" y="4" width="1" height="1" fill="#9a9a9a"/><rect x="0" y="6" width="1" height="1" fill="#9a9a9a"/><rect x="0" y="8" width="1" height="1" fill="#9a9a9a"/><rect x="0" y="10" width="1" height="1" fill="#9a9a9a"/></svg>
<div class="t" style="left:617px;top:560.5px;font-size:7px;line-height:8px;color:#222;">谷歌地图</div>
<svg class="a" style="left:646px;top:564px" width="4" height="3" viewBox="0 0 4 3"><path d="M0 0 L4 0 L2 2.5Z" fill="#222"/></svg>
<div class="t" style="left:658px;top:560.5px;font-size:7px;line-height:8px;color:#222;">高德地图</div>
<svg class="a" style="left:687px;top:564px" width="4" height="3" viewBox="0 0 4 3"><path d="M0 0 L4 0 L2 2.5Z" fill="#222"/></svg>
<div class="t" style="left:693px;top:560.5px;font-size:7px;line-height:8px;color:#222;">天地图</div>
<svg class="a" style="left:715px;top:564px" width="4" height="3" viewBox="0 0 4 3"><path d="M0 0 L4 0 L2 2.5Z" fill="#222"/></svg>
<div class="t" style="left:723px;top:560.5px;font-size:7px;line-height:8px;color:#222;">搜搜地图</div>
<svg class="a" style="left:751px;top:564px" width="4" height="3" viewBox="0 0 4 3"><path d="M0 0 L4 0 L2 2.5Z" fill="#222"/></svg>
<div class="t" style="left:762px;top:560.5px;font-size:7px;line-height:8px;color:#222;">必应地图</div>
<svg class="a" style="left:791px;top:564px" width="4" height="3" viewBox="0 0 4 3"><path d="M0 0 L4 0 L2 2.5Z" fill="#222"/></svg>
<div class="t" style="left:798px;top:560.5px;font-size:7px;line-height:8px;color:#222;">其它地图</div>
<svg class="a" style="left:827px;top:564px" width="4" height="3" viewBox="0 0 4 3"><path d="M0 0 L4 0 L2 2.5Z" fill="#222"/></svg>
<div class="a" style="left:652px;top:559px;width:1px;height:12px;background:#cfcfcf"></div>
<div class="a" style="left:757px;top:559px;width:1px;height:12px;background:#cfcfcf"></div>
<div class="a" style="left:833px;top:559px;width:1px;height:12px;background:#cfcfcf"></div>
<div class="a" style="left:835px;top:558px;width:93px;height:13px;background:#fff"></div>
<div class="t" style="left:837px;top:560.5px;font-size:7px;line-height:8px;color:#aaa;">切片图层列表</div>
<svg class="a" style="left:929px;top:564px" width="4" height="3" viewBox="0 0 4 3"><path d="M0 0 L4 0 L2 2.5Z" fill="#222"/></svg>
<svg class="a" style="left:935px;top:559px" width="10" height="11" viewBox="0 0 10 11"><path d="M1 10L9 1" stroke="#30a040" stroke-width="1.2"/><path d="M6 1H9V4" fill="none" stroke="#d03030" stroke-width="1.2"/><circle cx="3" cy="8" r="1.2" fill="#3070d0"/></svg>
<div class="a" style="left:948px;top:559px;width:1px;height:12px;background:#cfcfcf"></div>
<div class="t" style="left:952px;top:560.5px;font-size:7px;line-height:8px;color:#222;">选项...</div>
<svg class="a" style="left:973px;top:564px" width="4" height="3" viewBox="0 0 4 3"><path d="M0 0 L4 0 L2 2.5Z" fill="#222"/></svg>
<div class="a" style="left:978px;top:559px;width:1px;height:12px;background:#cfcfcf"></div>
<div class="t" style="left:982px;top:560.5px;font-size:7px;line-height:8px;color:#222;">用户/注册</div>
<svg class="a" style="left:1016px;top:560px" width="9" height="9" viewBox="0 0 9 9"><circle cx="4.5" cy="4.5" r="4.3" fill="#2a6ad8"/><rect x="3.8" y="3.5" width="1.4" height="4" fill="#fff"/><rect x="3.8" y="1.5" width="1.4" height="1.3" fill="#fff"/></svg>
<div class="a" style="left:1028px;top:558px;width:6px;height:15px;background:linear-gradient(#e4e4e4,#c9c9c9)"></div>
<svg class="a" style="left:1028px;top:568px" width="6" height="4" viewBox="0 0 6 4"><rect x="1" y="0" width="4" height="1" fill="#333"/><path d="M1 2 L5 2 L3.0 4Z" fill="#333"/></svg>
<div class="a" style="left:0px;top:573px;width:1080px;height:12px;background:#f0f0f0"></div>
<div class="a" style="left:911px;top:574px;width:169px;height:11px;background:#f4f4f4;border-left:1px solid #e2e2e2"></div>
<div class="t" style="left:921px;top:575.5px;font-size:7px;line-height:8px;color:#222;">2098.719&nbsp;&nbsp;447.234 米</div>
<svg class="a" style="left:0;top:0" width="1080" height="585"><path d="M518.20 99.5L519.7 98.00L521.20 99.5L519.7 101.00ZM516.50 101.2L518.0 99.70L519.50 101.2L518.0 102.70ZM517.20 104.0L518.7 102.50L520.20 104.0L518.7 105.50ZM524.80 111.3L526.3 109.80L527.80 111.3L526.3 112.80ZM531.50 120.8L533.0 119.30L534.50 120.8L533.0 122.30ZM541.80 120.3L543.3 118.80L544.80 120.3L543.3 121.80ZM524.80 124.2L526.3 122.70L527.80 124.2L526.3 125.70ZM523.50 127.7L525.0 126.20L526.50 127.7L525.0 129.20ZM526.00 129.3L527.5 127.80L529.00 129.3L527.5 130.80ZM537.30 130.3L538.8 128.80L540.30 130.3L538.8 131.80ZM456.80 129.3L458.3 127.80L459.80 129.3L458.3 130.80ZM459.00 133.3L460.5 131.80L462.00 133.3L460.5 134.80ZM479.80 130.3L481.3 128.80L482.80 130.3L481.3 131.80ZM470.80 139.3L472.3 137.80L473.80 139.3L472.3 140.80ZM517.50 137.2L519.0 135.70L520.50 137.2L519.0 138.70ZM531.70 135.3L533.2 133.80L534.70 135.3L533.2 136.80ZM499.70 142.8L501.2 141.30L502.70 142.8L501.2 144.30ZM498.30 144.5L499.8 143.00L501.30 144.5L499.8 146.00ZM490.00 147.3L491.5 145.80L493.00 147.3L491.5 148.80ZM485.00 150.7L486.5 149.20L488.00 150.7L486.5 152.20ZM517.50 147.8L519.0 146.30L520.50 147.8L519.0 149.30ZM526.50 149.5L528.0 148.00L529.50 149.5L528.0 151.00ZM515.80 151.8L517.3 150.30L518.80 151.8L517.3 153.30ZM541.80 144.0L543.3 142.50L544.80 144.0L543.3 145.50ZM542.70 149.5L544.2 148.00L545.70 149.5L544.2 151.00ZM482.50 155.2L484.0 153.70L485.50 155.2L484.0 156.70ZM485.00 158.0L486.5 156.50L488.00 158.0L486.5 159.50ZM494.50 156.8L496.0 155.30L497.50 156.8L496.0 158.30ZM506.30 158.5L507.8 157.00L509.30 158.5L507.8 160.00ZM479.30 165.3L480.8 163.80L482.30 165.3L480.8 166.80ZM489.30 165.3L490.8 163.80L492.30 165.3L490.8 166.80ZM492.70 168.7L494.2 167.20L495.70 168.7L494.2 170.20ZM497.30 170.3L498.8 168.80L500.30 170.3L498.8 171.80ZM497.30 173.0L498.8 171.50L500.30 173.0L498.8 174.50ZM470.80 168.0L472.3 166.50L473.80 168.0L472.3 169.50ZM515.20 166.5L516.7 165.00L518.20 166.5L516.7 168.00ZM522.70 165.3L524.2 163.80L525.70 165.3L524.2 166.80ZM529.80 167.0L531.3 165.50L532.80 167.0L531.3 168.50ZM530.50 169.8L532.0 168.30L533.50 169.8L532.0 171.30ZM514.30 172.5L515.8 171.00L517.30 172.5L515.8 174.00ZM523.70 172.0L525.2 170.50L526.70 172.0L525.2 173.50ZM507.50 174.2L509.0 172.70L510.50 174.2L509.0 175.70ZM438.80 172.5L440.3 171.00L441.80 172.5L440.3 174.00ZM429.80 176.5L431.3 175.00L432.80 176.5L431.3 178.00ZM419.70 184.5L421.2 183.00L422.70 184.5L421.2 186.00ZM492.30 185.0L493.8 183.50L495.30 185.0L493.8 186.50ZM561.50 108.5L563.0 107.00L564.50 108.5L563.0 110.00ZM545.70 116.8L547.2 115.30L548.70 116.8L547.2 118.30ZM569.30 120.2L570.8 118.70L572.30 120.2L570.8 121.70ZM560.30 125.3L561.8 123.80L563.30 125.3L561.8 126.80ZM551.30 128.7L552.8 127.20L554.30 128.7L552.8 130.20ZM548.50 132.0L550.0 130.50L551.50 132.0L550.0 133.50ZM546.30 138.3L547.8 136.80L549.30 138.3L547.8 139.80ZM572.70 142.8L574.2 141.30L575.70 142.8L574.2 144.30ZM550.20 145.7L551.7 144.20L553.20 145.7L551.7 147.20ZM548.50 147.8L550.0 146.30L551.50 147.8L550.0 149.30ZM560.80 150.2L562.3 148.70L563.80 150.2L562.3 151.70ZM569.80 151.8L571.3 150.30L572.80 151.8L571.3 153.30ZM558.70 155.2L560.2 153.70L561.70 155.2L560.2 156.70ZM558.70 159.0L560.2 157.50L561.70 159.0L560.2 160.50ZM570.50 158.0L572.0 156.50L573.50 158.0L572.0 159.50ZM578.80 163.5L580.3 162.00L581.80 163.5L580.3 165.00ZM591.30 163.5L592.8 162.00L594.30 163.5L592.8 165.00ZM566.50 167.5L568.0 166.00L569.50 167.5L568.0 169.00ZM573.30 169.2L574.8 167.70L576.30 169.2L574.8 170.70ZM580.50 168.7L582.0 167.20L583.50 168.7L582.0 170.20ZM576.20 177.0L577.7 175.50L579.20 177.0L577.7 178.50ZM591.80 176.0L593.3 174.50L594.80 176.0L593.3 177.50ZM576.70 182.0L578.2 180.50L579.70 182.0L578.2 183.50ZM580.00 186.2L581.5 184.70L583.00 186.2L581.5 187.70ZM598.50 179.3L600.0 177.80L601.50 179.3L600.0 180.80ZM603.70 179.3L605.2 177.80L606.70 179.3L605.2 180.80ZM612.00 176.5L613.5 175.00L615.00 176.5L613.5 178.00ZM610.30 185.5L611.8 184.00L613.30 185.5L611.8 187.00ZM594.50 111.8L596.0 110.30L597.50 111.8L596.0 113.30ZM609.30 110.8L610.8 109.30L612.30 110.8L610.8 112.30ZM623.80 106.8L625.3 105.30L626.80 106.8L625.3 108.30ZM638.00 101.2L639.5 99.70L641.00 101.2L639.5 102.70ZM650.30 98.8L651.8 97.30L653.30 98.8L651.8 100.30ZM642.00 105.7L643.5 104.20L645.00 105.7L643.5 107.20ZM641.30 107.8L642.8 106.30L644.30 107.8L642.8 109.30ZM648.20 104.5L649.7 103.00L651.20 104.5L649.7 106.00ZM635.00 109.7L636.5 108.20L638.00 109.7L636.5 111.20ZM645.80 110.8L647.3 109.30L648.80 110.8L647.3 112.30ZM649.80 109.7L651.3 108.20L652.80 109.7L651.3 111.20ZM628.30 113.0L629.8 111.50L631.30 113.0L629.8 114.50ZM661.50 105.7L663.0 104.20L664.50 105.7L663.0 107.20ZM658.20 110.2L659.7 108.70L661.20 110.2L659.7 111.70ZM663.20 113.0L664.7 111.50L666.20 113.0L664.7 114.50ZM673.30 99.5L674.8 98.00L676.30 99.5L674.8 101.00ZM696.50 102.3L698.0 100.80L699.50 102.3L698.0 103.80ZM703.20 96.7L704.7 95.20L706.20 96.7L704.7 98.20ZM720.70 100.0L722.2 98.50L723.70 100.0L722.2 101.50ZM716.20 105.7L717.7 104.20L719.20 105.7L717.7 107.20ZM721.80 109.0L723.3 107.50L724.80 109.0L723.3 110.50ZM722.70 113.7L724.2 112.20L725.70 113.7L724.2 115.20ZM723.00 119.2L724.5 117.70L726.00 119.2L724.5 120.70ZM581.70 119.2L583.2 117.70L584.70 119.2L583.2 120.70ZM588.30 119.2L589.8 117.70L591.30 119.2L589.8 120.70ZM601.30 118.7L602.8 117.20L604.30 118.7L602.8 120.20ZM613.30 117.5L614.8 116.00L616.30 117.5L614.8 119.00ZM668.80 118.2L670.3 116.70L671.80 118.2L670.3 119.70ZM684.00 121.3L685.5 119.80L687.00 121.3L685.5 122.80ZM685.30 123.2L686.8 121.70L688.30 123.2L686.8 124.70ZM693.70 124.2L695.2 122.70L696.70 124.2L695.2 125.70ZM716.70 125.8L718.2 124.30L719.70 125.8L718.2 127.30ZM700.30 130.8L701.8 129.30L703.30 130.8L701.8 132.30ZM670.50 128.2L672.0 126.70L673.50 128.2L672.0 129.70ZM672.80 130.3L674.3 128.80L675.80 130.3L674.3 131.80ZM637.30 129.3L638.8 127.80L640.30 129.3L638.8 130.80ZM639.70 131.0L641.2 129.50L642.70 131.0L641.2 132.50ZM605.30 131.5L606.8 130.00L608.30 131.5L606.8 133.00ZM610.30 129.8L611.8 128.30L613.30 129.8L611.8 131.30ZM613.30 136.7L614.8 135.20L616.30 136.7L614.8 138.20ZM623.30 139.5L624.8 138.00L626.30 139.5L624.8 141.00ZM631.30 137.8L632.8 136.30L634.30 137.8L632.8 139.30ZM644.70 158.0L646.2 156.50L647.70 158.0L646.2 159.50ZM647.80 157.3L649.3 155.80L650.80 157.3L649.3 158.80ZM649.50 158.5L651.0 157.00L652.50 158.5L651.0 160.00ZM630.00 164.7L631.5 163.20L633.00 164.7L631.5 166.20ZM633.50 167.5L635.0 166.00L636.50 167.5L635.0 169.00ZM661.00 166.3L662.5 164.80L664.00 166.3L662.5 167.80ZM660.50 169.8L662.0 168.30L663.50 169.8L662.0 171.30ZM662.70 173.2L664.2 171.70L665.70 173.2L664.2 174.70ZM666.20 164.2L667.7 162.70L669.20 164.2L667.7 165.70ZM670.50 176.0L672.0 174.50L673.50 176.0L672.0 177.50ZM683.00 163.0L684.5 161.50L686.00 163.0L684.5 164.50ZM686.30 177.7L687.8 176.20L689.30 177.7L687.8 179.20ZM701.50 156.8L703.0 155.30L704.50 156.8L703.0 158.30ZM704.30 159.0L705.8 157.50L707.30 159.0L705.8 160.50ZM714.30 158.0L715.8 156.50L717.30 158.0L715.8 159.50ZM719.00 160.8L720.5 159.30L722.00 160.8L720.5 162.30ZM705.50 168.0L707.0 166.50L708.50 168.0L707.0 169.50ZM708.30 177.0L709.8 175.50L711.30 177.0L709.8 178.50ZM695.80 180.5L697.3 179.00L698.80 180.5L697.3 182.00ZM702.00 184.3L703.5 182.80L705.00 184.3L703.5 185.80ZM710.50 186.2L712.0 184.70L713.50 186.2L712.0 187.70ZM727.50 104.7L729.0 103.20L730.50 104.7L729.0 106.20ZM733.00 112.5L734.5 111.00L736.00 112.5L734.5 114.00ZM733.70 117.5L735.2 116.00L736.70 117.5L735.2 119.00ZM738.70 118.0L740.2 116.50L741.70 118.0L740.2 119.50ZM747.20 115.8L748.7 114.30L750.20 115.8L748.7 117.30ZM754.30 122.5L755.8 121.00L757.30 122.5L755.8 124.00ZM747.70 124.8L749.2 123.30L750.70 124.8L749.2 126.30ZM728.50 127.7L730.0 126.20L731.50 127.7L730.0 129.20ZM755.50 129.3L757.0 127.80L758.50 129.3L757.0 130.80ZM748.30 130.5L749.8 129.00L751.30 130.5L749.8 132.00ZM742.70 133.2L744.2 131.70L745.70 133.2L744.2 134.70ZM749.80 137.2L751.3 135.70L752.80 137.2L751.3 138.70ZM749.80 145.0L751.3 143.50L752.80 145.0L751.3 146.50ZM746.50 158.5L748.0 157.00L749.50 158.5L748.0 160.00ZM735.80 164.2L737.3 162.70L738.80 164.2L737.3 165.70ZM738.70 173.2L740.2 171.70L741.70 173.2L740.2 174.70ZM741.00 172.5L742.5 171.00L744.00 172.5L742.5 174.00ZM736.20 184.5L737.7 183.00L739.20 184.5L737.7 186.00ZM738.30 183.8L739.8 182.30L741.30 183.8L739.8 185.30ZM411.80 195.5L413.3 194.00L414.80 195.5L413.3 197.00ZM431.50 198.0L433.0 196.50L434.50 198.0L433.0 199.50ZM442.20 194.0L443.7 192.50L445.20 194.0L443.7 195.50ZM446.20 194.5L447.7 193.00L449.20 194.5L447.7 196.00ZM478.70 190.0L480.2 188.50L481.70 190.0L480.2 191.50ZM484.30 194.5L485.8 193.00L487.30 194.5L485.8 196.00ZM473.50 201.8L475.0 200.30L476.50 201.8L475.0 203.30ZM478.70 207.5L480.2 206.00L481.70 207.5L480.2 209.00ZM409.50 207.0L411.0 205.50L412.50 207.0L411.0 208.50ZM416.30 207.5L417.8 206.00L419.30 207.5L417.8 209.00ZM410.20 213.2L411.7 211.70L413.20 213.2L411.7 214.70ZM415.30 218.2L416.8 216.70L418.30 218.2L416.8 219.70ZM469.20 214.8L470.7 213.30L472.20 214.8L470.7 216.30ZM504.00 213.7L505.5 212.20L507.00 213.7L505.5 215.20ZM515.80 214.8L517.3 213.30L518.80 214.8L517.3 216.30ZM515.80 217.2L517.3 215.70L518.80 217.2L517.3 218.70ZM493.30 217.0L494.8 215.50L496.30 217.0L494.8 218.50ZM502.80 218.7L504.3 217.20L505.80 218.7L504.3 220.20ZM526.50 222.2L528.0 220.70L529.50 222.2L528.0 223.70ZM536.20 208.0L537.7 206.50L539.20 208.0L537.7 209.50ZM539.00 209.2L540.5 207.70L542.00 209.2L540.5 210.70ZM406.70 230.0L408.2 228.50L409.70 230.0L408.2 231.50ZM474.20 227.2L475.7 225.70L477.20 227.2L475.7 228.70ZM476.70 227.2L478.2 225.70L479.70 227.2L478.2 228.70ZM492.30 225.0L493.8 223.50L495.30 225.0L493.8 226.50ZM502.80 227.8L504.3 226.30L505.80 227.8L504.3 229.30ZM505.20 232.0L506.7 230.50L508.20 232.0L506.7 233.50ZM504.70 234.7L506.2 233.20L507.70 234.7L506.2 236.20ZM514.70 230.0L516.2 228.50L517.70 230.0L516.2 231.50ZM465.80 234.5L467.3 233.00L468.80 234.5L467.3 236.00ZM423.70 238.3L425.2 236.80L426.70 238.3L425.2 239.80ZM427.50 239.5L429.0 238.00L430.50 239.5L429.0 241.00ZM417.30 241.8L418.8 240.30L420.30 241.8L418.8 243.30ZM427.50 243.0L429.0 241.50L430.50 243.0L429.0 244.50ZM475.30 240.7L476.8 239.20L478.30 240.7L476.8 242.20ZM500.50 241.8L502.0 240.30L503.50 241.8L502.0 243.30ZM502.50 243.7L504.0 242.20L505.50 243.7L504.0 245.20ZM491.70 244.0L493.2 242.50L494.70 244.0L493.2 245.50ZM516.30 240.7L517.8 239.20L519.30 240.7L517.8 242.20ZM533.80 244.0L535.3 242.50L536.80 244.0L535.3 245.50ZM400.50 249.2L402.0 247.70L403.50 249.2L402.0 250.70ZM458.50 246.8L460.0 245.30L461.50 246.8L460.0 248.30ZM471.00 249.2L472.5 247.70L474.00 249.2L472.5 250.70ZM496.80 252.5L498.3 251.00L499.80 252.5L498.3 254.00ZM401.70 258.0L403.2 256.50L404.70 258.0L403.2 259.50ZM404.00 261.5L405.5 260.00L407.00 261.5L405.5 263.00ZM415.30 257.0L416.8 255.50L418.30 257.0L416.8 258.50ZM455.00 256.3L456.5 254.80L458.00 256.3L456.5 257.80ZM466.30 261.5L467.8 260.00L469.30 261.5L467.8 263.00ZM503.50 258.7L505.0 257.20L506.50 258.7L505.0 260.20ZM485.50 264.8L487.0 263.30L488.50 264.8L487.0 266.30ZM495.70 263.8L497.2 262.30L498.70 263.8L497.2 265.30ZM407.80 269.8L409.3 268.30L410.80 269.8L409.3 271.30ZM508.70 272.2L510.2 270.70L511.70 272.2L510.2 273.70ZM452.30 278.3L453.8 276.80L455.30 278.3L453.8 279.80ZM422.50 280.0L424.0 278.50L425.50 280.0L424.0 281.50ZM426.00 279.5L427.5 278.00L429.00 279.5L427.5 281.00ZM486.50 277.2L488.0 275.70L489.50 277.2L488.0 278.70ZM513.70 280.0L515.2 278.50L516.70 280.0L515.2 281.50ZM498.00 281.2L499.5 279.70L501.00 281.2L499.5 282.70ZM405.00 282.3L406.5 280.80L408.00 282.3L406.5 283.80ZM463.00 282.8L464.5 281.30L466.00 282.8L464.5 284.30ZM520.20 283.3L521.7 281.80L523.20 283.3L521.7 284.80ZM535.50 283.3L537.0 281.80L538.50 283.3L537.0 284.80ZM591.70 190.0L593.2 188.50L594.70 190.0L593.2 191.50ZM598.00 189.5L599.5 188.00L601.00 189.5L599.5 191.00ZM557.00 195.5L558.5 194.00L560.00 195.5L558.5 197.00ZM561.50 197.3L563.0 195.80L564.50 197.3L563.0 198.80ZM562.00 201.8L563.5 200.30L565.00 201.8L563.5 203.30ZM546.80 205.2L548.3 203.70L549.80 205.2L548.3 206.70ZM604.80 209.7L606.3 208.20L607.80 209.7L606.3 211.20ZM611.00 208.0L612.5 206.50L614.00 208.0L612.5 209.50ZM613.30 209.7L614.8 208.20L616.30 209.7L614.8 211.20ZM609.30 214.8L610.8 213.30L612.30 214.8L610.8 216.30ZM591.30 218.2L592.8 216.70L594.30 218.2L592.8 219.70ZM593.50 221.5L595.0 220.00L596.50 221.5L595.0 223.00ZM593.50 223.3L595.0 221.80L596.50 223.3L595.0 224.80ZM608.70 225.0L610.2 223.50L611.70 225.0L610.2 226.50ZM628.30 221.5L629.8 220.00L631.30 221.5L629.8 223.00ZM652.50 203.5L654.0 202.00L655.50 203.5L654.0 205.00ZM664.30 199.0L665.8 197.50L667.30 199.0L665.8 200.50ZM678.50 203.0L680.0 201.50L681.50 203.0L680.0 204.50ZM706.50 204.0L708.0 202.50L709.50 204.0L708.0 205.50ZM573.80 233.3L575.3 231.80L576.80 233.3L575.3 234.80ZM560.80 239.5L562.3 238.00L563.80 239.5L562.3 241.00ZM547.50 243.0L549.0 241.50L550.50 243.0L549.0 244.50ZM695.30 231.7L696.8 230.20L698.30 231.7L696.8 233.20ZM706.50 229.5L708.0 228.00L709.50 229.5L708.0 231.00ZM721.80 230.0L723.3 228.50L724.80 230.0L723.3 231.50ZM675.20 237.8L676.7 236.30L678.20 237.8L676.7 239.30ZM636.30 245.2L637.8 243.70L639.30 245.2L637.8 246.70ZM649.70 245.7L651.2 244.20L652.70 245.7L651.2 247.20ZM654.80 248.5L656.3 247.00L657.80 248.5L656.3 250.00ZM653.50 250.3L655.0 248.80L656.50 250.3L655.0 251.80ZM662.00 247.3L663.5 245.80L665.00 247.3L663.5 248.80ZM617.70 250.3L619.2 248.80L620.70 250.3L619.2 251.80ZM644.70 254.7L646.2 253.20L647.70 254.7L646.2 256.20ZM654.30 254.2L655.8 252.70L657.30 254.2L655.8 255.70ZM712.80 248.0L714.3 246.50L715.80 248.0L714.3 249.50ZM702.00 255.3L703.5 253.80L705.00 255.3L703.5 256.80ZM700.30 260.8L701.8 259.30L703.30 260.8L701.8 262.30ZM702.70 262.7L704.2 261.20L705.70 262.7L704.2 264.20ZM715.50 259.8L717.0 258.30L718.50 259.8L717.0 261.30ZM636.80 260.8L638.3 259.30L639.80 260.8L638.3 262.30ZM599.30 264.8L600.8 263.30L602.30 264.8L600.8 266.30ZM566.00 269.8L567.5 268.30L569.00 269.8L567.5 271.30ZM578.30 268.2L579.8 266.70L581.30 268.2L579.8 269.70ZM588.50 269.8L590.0 268.30L591.50 269.8L590.0 271.30ZM587.80 272.3L589.3 270.80L590.80 272.3L589.3 273.80ZM576.20 276.7L577.7 275.20L579.20 276.7L577.7 278.20ZM571.00 280.7L572.5 279.20L574.00 280.7L572.5 282.20ZM585.20 281.2L586.7 279.70L588.20 281.2L586.7 282.70ZM632.30 271.0L633.8 269.50L635.30 271.0L633.8 272.50ZM632.80 276.2L634.3 274.70L635.80 276.2L634.3 277.70ZM635.20 277.2L636.7 275.70L638.20 277.2L636.7 278.70ZM641.30 272.2L642.8 270.70L644.30 272.2L642.8 273.70ZM568.50 283.7L570.0 282.20L571.50 283.7L570.0 285.20ZM724.70 190.0L726.2 188.50L727.70 190.0L726.2 191.50ZM730.70 193.5L732.2 192.00L733.70 193.5L732.2 195.00ZM733.70 191.7L735.2 190.20L736.70 191.7L735.2 193.20ZM739.70 188.8L741.2 187.30L742.70 188.8L741.2 190.30ZM739.20 196.8L740.7 195.30L742.20 196.8L740.7 198.30ZM725.70 210.3L727.2 208.80L728.70 210.3L727.2 211.80ZM732.50 209.2L734.0 207.70L735.50 209.2L734.0 210.70ZM739.70 235.0L741.2 233.50L742.70 235.0L741.2 236.50ZM746.50 243.0L748.0 241.50L749.50 243.0L748.0 244.50ZM748.30 241.2L749.8 239.70L751.30 241.2L749.8 242.70ZM755.50 241.8L757.0 240.30L758.50 241.8L757.0 243.30ZM738.20 246.3L739.7 244.80L741.20 246.3L739.7 247.80ZM771.30 242.3L772.8 240.80L774.30 242.3L772.8 243.80ZM786.50 247.3L788.0 245.80L789.50 247.3L788.0 248.80ZM796.00 255.8L797.5 254.30L799.00 255.8L797.5 257.30ZM801.00 264.3L802.5 262.80L804.00 264.3L802.5 265.80ZM773.00 266.0L774.5 264.50L776.00 266.0L774.5 267.50ZM767.80 269.3L769.3 267.80L770.80 269.3L769.3 270.80ZM785.30 268.2L786.8 266.70L788.30 268.2L786.8 269.70ZM782.50 272.8L784.0 271.30L785.50 272.8L784.0 274.30ZM793.30 273.8L794.8 272.30L796.30 273.8L794.8 275.30ZM792.70 280.7L794.2 279.20L795.70 280.7L794.2 282.20ZM800.00 281.7L801.5 280.20L803.00 281.7L801.5 283.20ZM804.50 278.8L806.0 277.30L807.50 278.8L806.0 280.30ZM419.70 285.2L421.2 283.70L422.70 285.2L421.2 286.70ZM426.30 290.2L427.8 288.70L429.30 290.2L427.8 291.70ZM406.80 296.8L408.3 295.30L409.80 296.8L408.3 298.30ZM411.30 304.8L412.8 303.30L414.30 304.8L412.8 306.30ZM424.80 308.7L426.3 307.20L427.80 308.7L426.3 310.20ZM398.30 311.5L399.8 310.00L401.30 311.5L399.8 313.00ZM403.80 312.7L405.3 311.20L406.80 312.7L405.3 314.20ZM419.70 313.8L421.2 312.30L422.70 313.8L421.2 315.30ZM382.70 316.0L384.2 314.50L385.70 316.0L384.2 317.50ZM379.20 318.8L380.7 317.30L382.20 318.8L380.7 320.30ZM393.30 320.5L394.8 319.00L396.30 320.5L394.8 322.00ZM410.70 317.2L412.2 315.70L413.70 317.2L412.2 318.70ZM428.20 325.0L429.7 323.50L431.20 325.0L429.7 326.50ZM388.80 329.0L390.3 327.50L391.80 329.0L390.3 330.50ZM394.30 329.0L395.8 327.50L397.30 329.0L395.8 330.50ZM419.70 329.0L421.2 327.50L422.70 329.0L421.2 330.50ZM383.20 333.5L384.7 332.00L386.20 333.5L384.7 335.00ZM405.00 333.5L406.5 332.00L408.00 333.5L406.5 335.00ZM375.30 336.8L376.8 335.30L378.30 336.8L376.8 338.30ZM372.30 342.5L373.8 341.00L375.30 342.5L373.8 344.00ZM379.80 341.3L381.3 339.80L382.80 341.3L381.3 342.80ZM384.80 340.8L386.3 339.30L387.80 340.8L386.3 342.30ZM374.20 344.8L375.7 343.30L377.20 344.8L375.7 346.30ZM391.20 345.8L392.7 344.30L394.20 345.8L392.7 347.30ZM391.20 349.8L392.7 348.30L394.20 349.8L392.7 351.30ZM387.70 353.2L389.2 351.70L390.70 353.2L389.2 354.70ZM386.00 357.7L387.5 356.20L389.00 357.7L387.5 359.20ZM378.20 363.8L379.7 362.30L381.20 363.8L379.7 365.30ZM386.50 365.5L388.0 364.00L389.50 365.5L388.0 367.00ZM376.50 368.3L378.0 366.80L379.50 368.3L378.0 369.80ZM377.00 372.3L378.5 370.80L380.00 372.3L378.5 373.80ZM394.80 369.5L396.3 368.00L397.80 369.5L396.3 371.00ZM416.30 353.7L417.8 352.20L419.30 353.7L417.8 355.20ZM415.30 371.0L416.8 369.50L418.30 371.0L416.8 372.50ZM440.70 326.7L442.2 325.20L443.70 326.7L442.2 328.20ZM443.50 326.7L445.0 325.20L446.50 326.7L445.0 328.20ZM440.50 328.5L442.0 327.00L443.50 328.5L442.0 330.00ZM436.00 336.3L437.5 334.80L439.00 336.3L437.5 337.80ZM446.20 339.7L447.7 338.20L449.20 339.7L447.7 341.20ZM445.50 341.8L447.0 340.30L448.50 341.8L447.0 343.30ZM436.00 345.8L437.5 344.30L439.00 345.8L437.5 347.30ZM446.70 349.8L448.2 348.30L449.70 349.8L448.2 351.30ZM456.80 304.2L458.3 302.70L459.80 304.2L458.3 305.70ZM470.30 309.8L471.8 308.30L473.30 309.8L471.8 311.30ZM468.50 327.8L470.0 326.30L471.50 327.8L470.0 329.30ZM455.70 338.5L457.2 337.00L458.70 338.5L457.2 340.00ZM456.80 341.3L458.3 339.80L459.80 341.3L458.3 342.80ZM459.70 344.2L461.2 342.70L462.70 344.2L461.2 345.70ZM455.70 345.8L457.2 344.30L458.70 345.8L457.2 347.30ZM464.20 346.5L465.7 345.00L467.20 346.5L465.7 348.00ZM468.70 348.7L470.2 347.20L471.70 348.7L470.2 350.20ZM474.30 352.5L475.8 351.00L477.30 352.5L475.8 354.00ZM471.50 358.8L473.0 357.30L474.50 358.8L473.0 360.30ZM477.20 357.7L478.7 356.20L480.20 357.7L478.7 359.20ZM463.70 364.3L465.2 362.80L466.70 364.3L465.2 365.80ZM461.30 368.8L462.8 367.30L464.30 368.8L462.8 370.30ZM462.50 373.5L464.0 372.00L465.50 373.5L464.0 375.00ZM467.50 380.2L469.0 378.70L470.50 380.2L469.0 381.70ZM490.20 287.8L491.7 286.30L493.20 287.8L491.7 289.30ZM500.70 289.0L502.2 287.50L503.70 289.0L502.2 290.50ZM494.00 295.2L495.5 293.70L497.00 295.2L495.5 296.70ZM506.30 298.7L507.8 297.20L509.30 298.7L507.8 300.20ZM508.00 311.5L509.5 310.00L511.00 311.5L509.5 313.00ZM516.50 308.7L518.0 307.20L519.50 308.7L518.0 310.20ZM522.20 319.3L523.7 317.80L525.20 319.3L523.7 320.80ZM531.70 317.2L533.2 315.70L534.70 317.2L533.2 318.70ZM482.70 328.3L484.2 326.80L485.70 328.3L484.2 329.80ZM479.30 340.2L480.8 338.70L482.30 340.2L480.8 341.70ZM495.20 338.5L496.7 337.00L498.20 338.5L496.7 340.00ZM512.00 349.2L513.5 347.70L515.00 349.2L513.5 350.70ZM523.80 352.5L525.3 351.00L526.80 352.5L525.3 354.00ZM503.00 356.5L504.5 355.00L506.00 356.5L504.5 358.00ZM515.80 362.2L517.3 360.70L518.80 362.2L517.3 363.70ZM487.70 363.8L489.2 362.30L490.70 363.8L489.2 365.30ZM507.50 369.5L509.0 368.00L510.50 369.5L509.0 371.00ZM526.00 370.0L527.5 368.50L529.00 370.0L527.5 371.50ZM536.70 367.8L538.2 366.30L539.70 367.8L538.2 369.30ZM568.80 288.5L570.3 287.00L571.80 288.5L570.3 290.00ZM573.80 291.3L575.3 289.80L576.80 291.3L575.3 292.80ZM580.00 289.7L581.5 288.20L583.00 289.7L581.5 291.20ZM598.00 315.5L599.5 314.00L601.00 315.5L599.5 317.00ZM557.50 321.0L559.0 319.50L560.50 321.0L559.0 322.50ZM570.50 320.5L572.0 319.00L573.50 320.5L572.0 322.00ZM569.80 325.5L571.3 324.00L572.80 325.5L571.3 327.00ZM545.20 326.2L546.7 324.70L548.20 326.2L546.7 327.70ZM626.80 326.2L628.3 324.70L629.80 326.2L628.3 327.70ZM631.80 321.7L633.3 320.20L634.80 321.7L633.3 323.20ZM647.50 313.2L649.0 311.70L650.50 313.2L649.0 314.70ZM643.00 336.3L644.5 334.80L646.00 336.3L644.5 337.80ZM618.30 346.5L619.8 345.00L621.30 346.5L619.8 348.00ZM659.80 294.2L661.3 292.70L662.80 294.2L661.3 295.70ZM666.20 290.7L667.7 289.20L669.20 290.7L667.7 292.20ZM666.50 305.8L668.0 304.30L669.50 305.8L668.0 307.30ZM667.70 312.2L669.2 310.70L670.70 312.2L669.2 313.70ZM663.80 325.0L665.3 323.50L666.80 325.0L665.3 326.50ZM678.50 324.3L680.0 322.80L681.50 324.3L680.0 325.80ZM680.20 323.3L681.7 321.80L683.20 323.3L681.7 324.80ZM679.20 326.7L680.7 325.20L682.20 326.7L680.7 328.20ZM668.80 341.3L670.3 339.80L671.80 341.3L670.3 342.80ZM666.20 345.8L667.7 344.30L669.20 345.8L667.7 347.30ZM680.50 336.8L682.0 335.30L683.50 336.8L682.0 338.30ZM677.30 346.5L678.8 345.00L680.30 346.5L678.8 348.00ZM679.50 353.2L681.0 351.70L682.50 353.2L681.0 354.70ZM687.50 285.7L689.0 284.20L690.50 285.7L689.0 287.20ZM706.70 285.7L708.2 284.20L709.70 285.7L708.2 287.20ZM688.00 291.3L689.5 289.80L691.00 291.3L689.5 292.80ZM708.80 293.5L710.3 292.00L711.80 293.5L710.3 295.00ZM694.70 299.7L696.2 298.20L697.70 299.7L696.2 301.20ZM720.70 298.0L722.2 296.50L723.70 298.0L722.2 299.50ZM711.20 306.5L712.7 305.00L714.20 306.5L712.7 308.00ZM691.30 308.2L692.8 306.70L694.30 308.2L692.8 309.70ZM690.30 317.2L691.8 315.70L693.30 317.2L691.8 318.70ZM702.70 317.2L704.2 315.70L705.70 317.2L704.2 318.70ZM716.20 317.2L717.7 315.70L719.20 317.2L717.7 318.70ZM695.80 325.0L697.3 323.50L698.80 325.0L697.3 326.50ZM703.20 328.3L704.7 326.80L706.20 328.3L704.7 329.80ZM689.70 330.7L691.2 329.20L692.70 330.7L691.2 332.20ZM693.00 340.2L694.5 338.70L696.00 340.2L694.5 341.70ZM713.80 347.5L715.3 346.00L716.80 347.5L715.3 349.00ZM544.50 363.8L546.0 362.30L547.50 363.8L546.0 365.30ZM552.00 362.2L553.5 360.70L555.00 362.2L553.5 363.70ZM560.80 359.8L562.3 358.30L563.80 359.8L562.3 361.30ZM567.20 359.8L568.7 358.30L570.20 359.8L568.7 361.30ZM571.70 358.8L573.2 357.30L574.70 358.8L573.2 360.30ZM575.50 360.5L577.0 359.00L578.50 360.5L577.0 362.00ZM578.80 358.2L580.3 356.70L581.80 358.2L580.3 359.70ZM576.20 366.0L577.7 364.50L579.20 366.0L577.7 367.50ZM579.50 370.0L581.0 368.50L582.50 370.0L581.0 371.50ZM556.50 371.7L558.0 370.20L559.50 371.7L558.0 373.20ZM563.20 380.2L564.7 378.70L566.20 380.2L564.7 381.70ZM591.30 376.7L592.8 375.20L594.30 376.7L592.8 378.20ZM603.70 377.3L605.2 375.80L606.70 377.3L605.2 378.80ZM620.50 373.3L622.0 371.80L623.50 373.3L622.0 374.80ZM632.30 368.8L633.8 367.30L635.30 368.8L633.8 370.30ZM639.70 368.3L641.2 366.80L642.70 368.3L641.2 369.80ZM642.50 368.8L644.0 367.30L645.50 368.8L644.0 370.30ZM647.50 374.5L649.0 373.00L650.50 374.5L649.0 376.00ZM654.80 376.7L656.3 375.20L657.80 376.7L656.3 378.20ZM666.20 366.0L667.7 364.50L669.20 366.0L667.7 367.50ZM664.30 371.7L665.8 370.20L667.30 371.7L665.8 373.20ZM666.50 372.3L668.0 370.80L669.50 372.3L668.0 373.80ZM674.50 361.0L676.0 359.50L677.50 361.0L676.0 362.50ZM675.70 368.8L677.2 367.30L678.70 368.8L677.2 370.30ZM681.80 373.5L683.3 372.00L684.80 373.5L683.3 375.00ZM698.20 363.3L699.7 361.80L701.20 363.3L699.7 364.80ZM701.00 363.3L702.5 361.80L704.00 363.3L702.5 364.80ZM697.70 378.5L699.2 377.00L700.70 378.5L699.2 380.00ZM724.70 289.7L726.2 288.20L727.70 289.7L726.2 291.20ZM733.00 293.5L734.5 292.00L736.00 293.5L734.5 295.00ZM746.00 302.5L747.5 301.00L749.00 302.5L747.5 304.00ZM724.30 307.0L725.8 305.50L727.30 307.0L725.8 308.50ZM739.20 311.5L740.7 310.00L742.20 311.5L740.7 313.00ZM760.00 317.2L761.5 315.70L763.00 317.2L761.5 318.70ZM728.50 321.0L730.0 319.50L731.50 321.0L730.0 322.50ZM753.30 322.2L754.8 320.70L756.30 322.2L754.8 323.70ZM735.30 326.2L736.8 324.70L738.30 326.2L736.8 327.70ZM739.20 330.7L740.7 329.20L742.20 330.7L740.7 332.20ZM767.80 330.2L769.3 328.70L770.80 330.2L769.3 331.70ZM743.70 340.2L745.2 338.70L746.70 340.2L745.2 341.70ZM771.80 340.2L773.3 338.70L774.80 340.2L773.3 341.70ZM762.30 346.5L763.8 345.00L765.30 346.5L763.8 348.00ZM740.30 354.8L741.8 353.30L743.30 354.8L741.8 356.30ZM743.70 353.7L745.2 352.20L746.70 353.7L745.2 355.20ZM774.70 353.7L776.2 352.20L777.70 353.7L776.2 355.20ZM734.70 360.5L736.2 359.00L737.70 360.5L736.2 362.00ZM742.70 361.0L744.2 359.50L745.70 361.0L744.2 362.50ZM725.20 363.3L726.7 361.80L728.20 363.3L726.7 364.80ZM762.30 365.0L763.8 363.50L765.30 365.0L763.8 366.50ZM774.70 364.3L776.2 362.80L777.70 364.3L776.2 365.80ZM742.70 368.3L744.2 366.80L745.70 368.3L744.2 369.80ZM744.30 377.3L745.8 375.80L747.30 377.3L745.8 378.80ZM744.30 380.2L745.8 378.70L747.30 380.2L745.8 381.70ZM802.20 289.0L803.7 287.50L805.20 289.0L803.7 290.50ZM804.20 289.0L805.7 287.50L807.20 289.0L805.7 290.50ZM813.50 291.3L815.0 289.80L816.50 291.3L815.0 292.80ZM809.50 294.7L811.0 293.20L812.50 294.7L811.0 296.20ZM827.70 291.8L829.2 290.30L830.70 291.8L829.2 293.30ZM829.80 291.3L831.3 289.80L832.80 291.3L831.3 292.80ZM848.30 290.7L849.8 289.20L851.30 290.7L849.8 292.20ZM852.30 291.3L853.8 289.80L855.30 291.3L853.8 292.80ZM844.50 296.3L846.0 294.80L847.50 296.3L846.0 297.80ZM830.30 299.2L831.8 297.70L833.30 299.2L831.8 300.70ZM849.50 298.7L851.0 297.20L852.50 298.7L851.0 300.20ZM801.00 301.3L802.5 299.80L804.00 301.3L802.5 302.80ZM815.00 301.3L816.5 299.80L818.00 301.3L816.5 302.80ZM810.20 305.8L811.7 304.30L813.20 305.8L811.7 307.30ZM822.50 306.5L824.0 305.00L825.50 306.5L824.0 308.00ZM836.00 305.3L837.5 303.80L839.00 305.3L837.5 306.80ZM839.30 308.7L840.8 307.20L842.30 308.7L840.8 310.20ZM853.50 310.3L855.0 308.80L856.50 310.3L855.0 311.80ZM823.50 312.2L825.0 310.70L826.50 312.2L825.0 313.70ZM808.30 317.2L809.8 315.70L811.30 317.2L809.8 318.70ZM822.50 320.0L824.0 318.50L825.50 320.0L824.0 321.50ZM837.50 322.8L839.0 321.30L840.50 322.8L839.0 324.30ZM824.20 326.2L825.7 324.70L827.20 326.2L825.7 327.70ZM854.00 323.8L855.5 322.30L857.00 323.8L855.5 325.30ZM807.80 331.8L809.3 330.30L810.80 331.8L809.3 333.30ZM813.50 335.2L815.0 333.70L816.50 335.2L815.0 336.70ZM810.70 341.3L812.2 339.80L813.70 341.3L812.2 342.80ZM815.00 341.3L816.5 339.80L818.00 341.3L816.5 342.80ZM818.00 340.8L819.5 339.30L821.00 340.8L819.5 342.30ZM814.00 349.8L815.5 348.30L817.00 349.8L815.5 351.30ZM831.50 349.8L833.0 348.30L834.50 349.8L833.0 351.30ZM830.70 351.5L832.2 350.00L833.70 351.5L832.2 353.00ZM843.20 354.2L844.7 352.70L846.20 354.2L844.7 355.70ZM814.50 361.0L816.0 359.50L817.50 361.0L816.0 362.50ZM815.70 368.8L817.2 367.30L818.70 368.8L817.2 370.30ZM822.50 368.8L824.0 367.30L825.50 368.8L824.0 370.30ZM824.80 370.5L826.3 369.00L827.80 370.5L826.3 372.00ZM843.80 380.2L845.3 378.70L846.80 380.2L845.3 381.70ZM430.30 381.8L431.8 380.30L433.30 381.8L431.8 383.30ZM443.30 385.8L444.8 384.30L446.30 385.8L444.8 387.30ZM452.30 391.3L453.8 389.80L455.30 391.3L453.8 392.80ZM469.20 389.7L470.7 388.20L472.20 389.7L470.7 391.20ZM460.80 401.2L462.3 399.70L463.80 401.2L462.3 402.70ZM467.00 402.7L468.5 401.20L470.00 402.7L468.5 404.20ZM462.50 409.5L464.0 408.00L465.50 409.5L464.0 411.00ZM397.70 410.0L399.2 408.50L400.70 410.0L399.2 411.50ZM400.20 410.0L401.7 408.50L403.20 410.0L401.7 411.50ZM397.30 412.0L398.8 410.50L400.30 412.0L398.8 413.50ZM423.20 417.8L424.7 416.30L426.20 417.8L424.7 419.30ZM446.70 420.2L448.2 418.70L449.70 420.2L448.2 421.70ZM402.30 426.8L403.8 425.30L405.30 426.8L403.8 428.30ZM470.30 426.2L471.8 424.70L473.30 426.2L471.8 427.70ZM410.20 439.2L411.7 437.70L413.20 439.2L411.7 440.70ZM420.30 450.5L421.8 449.00L423.30 450.5L421.8 452.00ZM434.80 460.0L436.3 458.50L437.80 460.0L436.3 461.50ZM446.70 472.8L448.2 471.30L449.70 472.8L448.2 474.30ZM449.50 472.3L451.0 470.80L452.50 472.3L451.0 473.80ZM474.80 474.7L476.3 473.20L477.80 474.7L476.3 476.20ZM494.50 433.5L496.0 432.00L497.50 433.5L496.0 435.00ZM494.50 435.5L496.0 434.00L497.50 435.5L496.0 437.00ZM494.50 440.8L496.0 439.30L497.50 440.8L496.0 442.30ZM500.20 439.2L501.7 437.70L503.20 439.2L501.7 440.70ZM508.00 431.8L509.5 430.30L511.00 431.8L509.5 433.30ZM528.30 433.7L529.8 432.20L531.30 433.7L529.8 435.20ZM522.20 448.2L523.7 446.70L525.20 448.2L523.7 449.70ZM506.30 451.7L507.8 450.20L509.30 451.7L507.8 453.20ZM519.80 457.2L521.3 455.70L522.80 457.2L521.3 458.70ZM526.50 457.2L528.0 455.70L529.50 457.2L528.0 458.70ZM528.30 455.0L529.8 453.50L531.30 455.0L529.8 456.50ZM517.70 475.2L519.2 473.70L520.70 475.2L519.2 476.70ZM519.80 474.0L521.3 472.50L522.80 474.0L521.3 475.50ZM530.50 475.7L532.0 474.20L533.50 475.7L532.0 477.20ZM542.70 402.7L544.2 401.20L545.70 402.7L544.2 404.20ZM542.20 419.7L543.7 418.20L545.20 419.7L543.7 421.20ZM564.80 384.5L566.3 383.00L567.80 384.5L566.3 386.00ZM563.20 389.2L564.7 387.70L566.20 389.2L564.7 390.70ZM550.80 394.8L552.3 393.30L553.80 394.8L552.3 396.30ZM552.50 409.5L554.0 408.00L555.50 409.5L554.0 411.00ZM546.80 413.3L548.3 411.80L549.80 413.3L548.3 414.80ZM573.80 406.0L575.3 404.50L576.80 406.0L575.3 407.50ZM598.20 403.8L599.7 402.30L601.20 403.8L599.7 405.30ZM614.80 390.3L616.3 388.80L617.80 390.3L616.3 391.80ZM632.30 394.8L633.8 393.30L635.30 394.8L633.8 396.30ZM637.50 389.2L639.0 387.70L640.50 389.2L639.0 390.70ZM638.50 398.7L640.0 397.20L641.50 398.7L640.0 400.20ZM649.20 383.0L650.7 381.50L652.20 383.0L650.7 384.50ZM653.20 384.0L654.7 382.50L656.20 384.0L654.7 385.50ZM659.30 381.8L660.8 380.30L662.30 381.8L660.8 383.30ZM659.30 385.2L660.8 383.70L662.30 385.2L660.8 386.70ZM657.70 388.0L659.2 386.50L660.70 388.0L659.2 389.50ZM703.20 383.5L704.7 382.00L706.20 383.5L704.7 385.00ZM711.20 393.2L712.7 391.70L714.20 393.2L712.7 394.70ZM607.70 412.8L609.2 411.30L610.70 412.8L609.2 414.30ZM588.50 419.7L590.0 418.20L591.50 419.7L590.0 421.20ZM625.50 417.8L627.0 416.30L628.50 417.8L627.0 419.30ZM631.30 417.3L632.8 415.80L634.30 417.3L632.8 418.80ZM636.80 412.3L638.3 410.80L639.80 412.3L638.3 413.80ZM642.00 419.7L643.5 418.20L645.00 419.7L643.5 421.20ZM648.70 416.8L650.2 415.30L651.70 416.8L650.2 418.30ZM648.70 422.3L650.2 420.80L651.70 422.3L650.2 423.80ZM644.20 426.2L645.7 424.70L647.20 426.2L645.7 427.70ZM646.00 426.8L647.5 425.30L649.00 426.8L647.5 428.30ZM613.80 424.7L615.3 423.20L616.80 424.7L615.3 426.20ZM596.80 435.3L598.3 433.80L599.80 435.3L598.3 436.80ZM608.70 436.3L610.2 434.80L611.70 436.3L610.2 437.80ZM617.20 441.5L618.7 440.00L620.20 441.5L618.7 443.00ZM611.70 446.5L613.2 445.00L614.70 446.5L613.2 448.00ZM611.00 451.0L612.5 449.50L614.00 451.0L612.5 452.50ZM613.30 451.7L614.8 450.20L616.30 451.7L614.8 453.20ZM548.50 439.8L550.0 438.30L551.50 439.8L550.0 441.30ZM559.70 446.0L561.2 444.50L562.70 446.0L561.2 447.50ZM571.70 455.0L573.2 453.50L574.70 455.0L573.2 456.50ZM578.80 463.3L580.3 461.80L581.80 463.3L580.3 464.80ZM705.30 434.8L706.8 433.30L708.30 434.8L706.8 436.30ZM690.80 447.7L692.3 446.20L693.80 447.7L692.3 449.20ZM693.20 456.2L694.7 454.70L696.20 456.2L694.7 457.70ZM704.80 452.2L706.3 450.70L707.80 452.2L706.3 453.70ZM709.80 452.2L711.3 450.70L712.80 452.2L711.3 453.70ZM709.30 455.0L710.8 453.50L712.30 455.0L710.8 456.50ZM682.80 460.7L684.3 459.20L685.80 460.7L684.3 462.20ZM685.30 461.8L686.8 460.30L688.30 461.8L686.8 463.30ZM695.80 460.7L697.3 459.20L698.80 460.7L697.3 462.20ZM713.30 464.5L714.8 463.00L716.30 464.5L714.8 466.00ZM722.30 462.8L723.8 461.30L725.30 462.8L723.8 464.30ZM668.80 467.8L670.3 466.30L671.80 467.8L670.3 469.30ZM738.20 381.5L739.7 380.00L741.20 381.5L739.7 383.00ZM734.70 385.2L736.2 383.70L737.70 385.2L736.2 386.70ZM746.50 385.2L748.0 383.70L749.50 385.2L748.0 386.70ZM757.80 387.5L759.3 386.00L760.80 387.5L759.3 389.00ZM767.80 393.7L769.3 392.20L770.80 393.7L769.3 395.20ZM724.30 402.2L725.8 400.70L727.30 402.2L725.8 403.70ZM739.80 402.7L741.3 401.20L742.80 402.7L741.3 404.20ZM731.30 412.2L732.8 410.70L734.30 412.2L732.8 413.70ZM735.30 415.7L736.8 414.20L738.30 415.7L736.8 417.20ZM729.70 417.8L731.2 416.30L732.70 417.8L731.2 419.30ZM730.80 419.2L732.3 417.70L733.80 419.2L732.3 420.70ZM742.70 417.3L744.2 415.80L745.70 417.3L744.2 418.80ZM744.80 418.5L746.3 417.00L747.80 418.5L746.3 420.00ZM743.20 419.2L744.7 417.70L746.20 419.2L744.7 420.70ZM725.70 426.3L727.2 424.80L728.70 426.3L727.2 427.80ZM739.20 424.7L740.7 423.20L742.20 424.7L740.7 426.20ZM739.20 427.5L740.7 426.00L742.20 427.5L740.7 429.00ZM750.50 428.5L752.0 427.00L753.50 428.5L752.0 430.00ZM732.50 439.8L734.0 438.30L735.50 439.8L734.0 441.30ZM738.70 444.8L740.2 443.30L741.70 444.8L740.2 446.30ZM771.80 449.8L773.3 448.30L774.80 449.8L773.3 451.30ZM747.20 455.5L748.7 454.00L750.20 455.5L748.7 457.00ZM741.00 462.3L742.5 460.80L744.00 462.3L742.5 463.80ZM735.80 469.5L737.3 468.00L738.80 469.5L737.3 471.00ZM751.00 468.3L752.5 466.80L754.00 468.3L752.5 469.80ZM748.30 473.5L749.8 472.00L751.30 473.5L749.8 475.00ZM748.80 475.7L750.3 474.20L751.80 475.7L750.3 477.20ZM754.50 474.0L756.0 472.50L757.50 474.0L756.0 475.50ZM769.70 465.5L771.2 464.00L772.70 465.5L771.2 467.00ZM770.20 467.8L771.7 466.30L773.20 467.8L771.7 469.30ZM765.20 477.2L766.7 475.70L768.20 477.2L766.7 478.70ZM795.50 418.5L797.0 417.00L798.50 418.5L797.0 420.00ZM805.50 397.0L807.0 395.50L808.50 397.0L807.0 398.50ZM828.20 393.7L829.7 392.20L831.20 393.7L829.7 395.20ZM837.70 394.8L839.2 393.30L840.70 394.8L839.2 396.30ZM842.20 386.8L843.7 385.30L845.20 386.8L843.7 388.30ZM832.70 401.0L834.2 399.50L835.70 401.0L834.2 402.50ZM836.00 402.2L837.5 400.70L839.00 402.2L837.5 403.70ZM450.70 482.5L452.2 481.00L453.70 482.5L452.2 484.00ZM462.00 480.8L463.5 479.30L465.00 480.8L463.5 482.30ZM473.70 485.3L475.2 483.80L476.70 485.3L475.2 486.80ZM483.80 480.8L485.3 479.30L486.80 480.8L485.3 482.30ZM485.70 483.7L487.2 482.20L488.70 483.7L487.2 485.20ZM484.50 485.3L486.0 483.80L487.50 485.3L486.0 486.80ZM517.50 478.3L519.0 476.80L520.50 478.3L519.0 479.80ZM523.80 484.2L525.3 482.70L526.80 484.2L525.3 485.70ZM541.20 482.0L542.7 480.50L544.20 482.0L542.7 483.50ZM460.80 497.2L462.3 495.70L463.80 497.2L462.3 498.70ZM475.50 511.8L477.0 510.30L478.50 511.8L477.0 513.30ZM488.80 521.3L490.3 519.80L491.80 521.3L490.3 522.80ZM515.30 531.0L516.8 529.50L518.30 531.0L516.8 532.50ZM540.20 504.3L541.7 502.80L543.20 504.3L541.7 505.80ZM537.30 506.7L538.8 505.20L540.30 506.7L538.8 508.20ZM538.50 510.7L540.0 509.20L541.50 510.7L540.0 512.20ZM543.00 514.7L544.5 513.20L546.00 514.7L544.5 516.20ZM543.00 534.3L544.5 532.80L546.00 534.3L544.5 535.80ZM561.50 484.2L563.0 482.70L564.50 484.2L563.0 485.70ZM563.80 482.5L565.3 481.00L566.80 482.5L565.3 484.00ZM574.30 486.3L575.8 484.80L577.30 486.3L575.8 487.80ZM588.50 479.7L590.0 478.20L591.50 479.7L590.0 481.20ZM592.30 492.0L593.8 490.50L595.30 492.0L593.8 493.50ZM560.30 496.5L561.8 495.00L563.30 496.5L561.8 498.00ZM562.00 496.0L563.5 494.50L565.00 496.0L563.5 497.50ZM591.80 496.5L593.3 495.00L594.80 496.5L593.3 498.00ZM591.30 498.8L592.8 497.30L594.30 498.8L592.8 500.30ZM551.30 501.0L552.8 499.50L554.30 501.0L552.8 502.50ZM551.30 503.3L552.8 501.80L554.30 503.3L552.8 504.80ZM564.30 502.2L565.8 500.70L567.30 502.2L565.8 503.70ZM569.30 499.8L570.8 498.30L572.30 499.8L570.8 501.30ZM564.30 507.2L565.8 505.70L567.30 507.2L565.8 508.70ZM564.80 508.3L566.3 506.80L567.80 508.3L566.3 509.80ZM589.00 506.2L590.5 504.70L592.00 506.2L590.5 507.70ZM552.50 519.0L554.0 517.50L555.50 519.0L554.0 520.50ZM576.70 514.0L578.2 512.50L579.70 514.0L578.2 515.50ZM580.70 511.2L582.2 509.70L583.70 511.2L582.2 512.70ZM592.30 518.5L593.8 517.00L595.30 518.5L593.8 520.00ZM580.00 525.8L581.5 524.30L583.00 525.8L581.5 527.30ZM586.80 525.3L588.3 523.80L589.80 525.3L588.3 526.80ZM587.80 527.0L589.3 525.50L590.80 527.0L589.3 528.50ZM570.50 532.0L572.0 530.50L573.50 532.0L572.0 533.50ZM615.00 491.5L616.5 490.00L618.00 491.5L616.5 493.00ZM611.00 507.8L612.5 506.30L614.00 507.8L612.5 509.30ZM613.80 514.5L615.3 513.00L616.80 514.5L615.3 516.00ZM622.80 521.8L624.3 520.30L625.80 521.8L624.3 523.30ZM615.00 527.5L616.5 526.00L618.00 527.5L616.5 529.00ZM617.80 529.2L619.3 527.70L620.80 529.2L619.3 530.70ZM625.00 527.0L626.5 525.50L628.00 527.0L626.5 528.50ZM633.00 530.3L634.5 528.80L636.00 530.3L634.5 531.80ZM653.70 478.8L655.2 477.30L656.70 478.8L655.2 480.30ZM648.70 484.8L650.2 483.30L651.70 484.8L650.2 486.30ZM645.80 491.0L647.3 489.50L648.80 491.0L647.3 492.50ZM652.70 501.7L654.2 500.20L655.70 501.7L654.2 503.20ZM647.70 512.3L649.2 510.80L650.70 512.3L649.2 513.80ZM647.70 521.8L649.2 520.30L650.70 521.8L649.2 523.30ZM663.30 528.7L664.8 527.20L666.30 528.7L664.8 530.20ZM665.00 497.2L666.5 495.70L668.00 497.2L666.5 498.70ZM670.70 506.2L672.2 504.70L673.70 506.2L672.2 507.70ZM667.70 479.7L669.2 478.20L670.70 479.7L669.2 481.20ZM673.50 479.7L675.0 478.20L676.50 479.7L675.0 481.20ZM673.50 482.0L675.0 480.50L676.50 482.0L675.0 483.50ZM668.80 484.7L670.3 483.20L671.80 484.7L670.3 486.20ZM696.70 479.2L698.2 477.70L699.70 479.2L698.2 480.70ZM701.50 480.8L703.0 479.30L704.50 480.8L703.0 482.30ZM717.80 479.2L719.3 477.70L720.80 479.2L719.3 480.70ZM717.30 484.8L718.8 483.30L720.30 484.8L718.8 486.30ZM695.80 490.3L697.3 488.80L698.80 490.3L697.3 491.80ZM683.00 494.3L684.5 492.80L686.00 494.3L684.5 495.80ZM692.00 498.2L693.5 496.70L695.00 498.2L693.5 499.70ZM699.80 519.7L701.3 518.20L702.80 519.7L701.3 521.20ZM680.20 525.8L681.7 524.30L683.20 525.8L681.7 527.30ZM751.70 491.0L753.2 489.50L754.70 491.0L753.2 492.50ZM738.20 501.0L739.7 499.50L741.20 501.0L739.7 502.50ZM724.70 509.0L726.2 507.50L727.70 509.0L726.2 510.50Z" fill="#ffff00"/></svg>
<svg class="a" style="left:1010px;top:82px" width="20" height="80"><circle cx="9" cy="8.799999999999997" r="3.6" fill="#7a5410"/><circle cx="9" cy="8.799999999999997" r="2.2" fill="#8a6014"/><circle cx="9" cy="24" r="3.6" fill="#7a5410"/><circle cx="9" cy="24" r="2.2" fill="#8a6014"/><circle cx="9" cy="39.3" r="3.6" fill="#7a5410"/><circle cx="9" cy="39.3" r="2.2" fill="#8a6014"/><circle cx="9" cy="54.400000000000006" r="3.6" fill="#7a5410"/><circle cx="9" cy="54.400000000000006" r="2.2" fill="#8a6014"/><circle cx="9" cy="69.69999999999999" r="3.6" fill="#7a5410"/><circle cx="9" cy="69.69999999999999" r="2.2" fill="#8a6014"/></svg>
<div class="t" style="left:1047px;top:81px;width:16px;font-size:15px;line-height:15px;color:#6a0e06;white-space:normal;text-align:center">作<br>词<br><span style="display:inline-block;height:15px">:</span><br>古<br>小<br>力</div>
<svg class="a" style="left:845px;top:512px" width="55" height="45" viewBox="0 0 55 45">
<ellipse cx="21" cy="18.5" rx="15" ry="13" fill="#d9d9d9"/><path d="M10 26L9 32.5L16 29Z" fill="#d9d9d9"/>
<circle cx="15.5" cy="14" r="1.9" fill="#000"/><circle cx="27.5" cy="14" r="1.9" fill="#000"/>
<ellipse cx="35.5" cy="27.5" rx="13.5" ry="12.2" fill="#000"/>
<ellipse cx="35.5" cy="27.5" rx="12.5" ry="11.2" fill="#d9d9d9"/><path d="M42 36L46 40L45 33Z" fill="#d9d9d9"/>
<circle cx="31" cy="24" r="1.6" fill="#000"/><circle cx="40" cy="24" r="1.6" fill="#000"/>
</svg>
<div class="t" style="left:899px;top:518px;font-size:26.2px;line-height:34px;color:#fff;font-weight:300">Gis技术分享</div>
<div class="a" style="left:1058px;top:520px;width:22px;height:45px;background:#3a3a3a;border-radius:3px 0 0 3px"></div>
<div class="a" style="left:1075px;top:523px;width:2px;height:39px;background:#777"></div>
<div class="t" style="left:1063.5px;top:522.5px;font-size:7px;line-height:8px;color:#e8e8e8;font-weight:300">中</div>
<svg class="a" style="left:1065px;top:533px" width="6" height="6" viewBox="0 0 6 6"><circle cx="4" cy="1.5" r="1" fill="none" stroke="#ddd" stroke-width=".6"/><path d="M1.5 3.5L1 5.5" stroke="#ddd" stroke-width=".8"/></svg>
<svg class="a" style="left:1061px;top:540px" width="13" height="22" viewBox="0 0 13 22"><path d="M6 0.5A4.5 4.5 0 1 0 11 6.5A4 4 0 0 1 6 0.5Z" fill="#fff"/><path d="M2 13.5L5 12.5H8L11 13.5L12 16.5H10V21H3V16.5H1Z" fill="#fff"/></svg>
</body></html>
